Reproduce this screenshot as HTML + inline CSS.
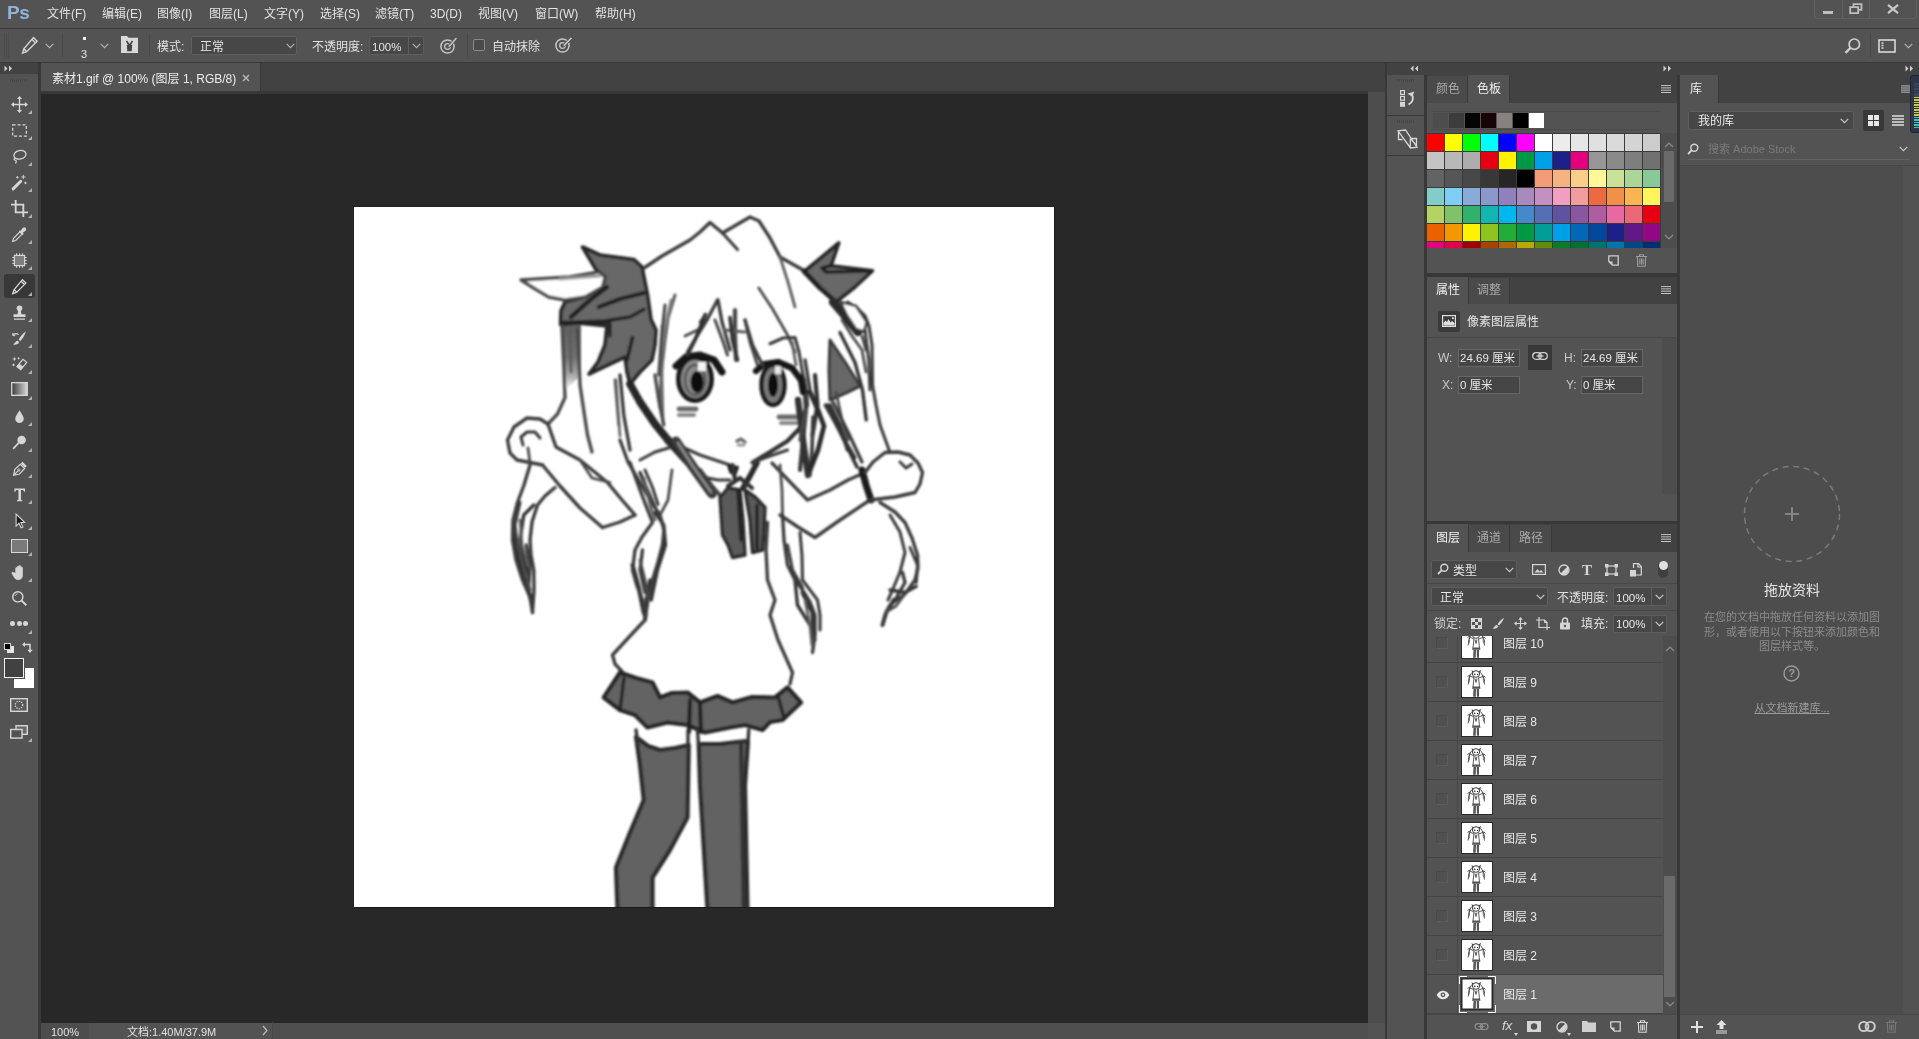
<!DOCTYPE html>
<html lang="zh-CN">
<head>
<meta charset="utf-8">
<title>素材1.gif @ 100% (图层 1, RGB/8)</title>
<style>
*{box-sizing:border-box;margin:0;padding:0}
html,body{width:1919px;height:1039px;overflow:hidden;background:#535353}
body{position:relative;font-family:"Liberation Sans","Noto Sans CJK SC",sans-serif;font-size:12px;color:#e2e2e2;line-height:1}
.a{position:absolute}
.t{position:absolute;white-space:nowrap;line-height:16px;height:16px;will-change:transform}
.bg1{background:#535353}
.bg2{background:#424242}
.bd{background:#383838}
.inp{position:absolute;background:#454545;border:1px solid #666}
.dd{position:absolute;background:#474747;border:1px solid #5e5e5e;border-radius:2px}
svg{position:absolute;overflow:visible}
.ic{fill:none}
.icf{fill:#d6d6d6;stroke:none}
</style>
</head>
<body>
<!-- ===== frame ===== -->
<div class="a bg1" style="left:0;top:0;width:1919px;height:28px"></div>
<div class="a bd" style="left:0;top:28px;width:1919px;height:1px"></div>
<div class="a bg1" style="left:0;top:29px;width:1919px;height:33px"></div>
<div class="a bd" style="left:0;top:62px;width:1919px;height:1px"></div>
<!-- dark strip row under options bar -->
<div class="a bg2" style="left:0;top:63px;width:1919px;height:29px"></div>
<!-- left toolbar -->
<div class="a bg1" style="left:0;top:74px;width:38px;height:965px"></div>
<div class="a bd" style="left:38px;top:63px;width:3px;height:976px"></div>
<!-- document tab -->
<div class="a bg1" style="left:41px;top:63px;width:219px;height:28px"></div>
<div class="a bd" style="left:260px;top:63px;width:1px;height:28px"></div>
<!-- canvas area -->
<div class="a bd" style="left:41px;top:91px;width:1327px;height:3px"></div>
<div class="a" style="left:41px;top:93.5px;width:1327px;height:929.5px;background:#282828"></div>
<!-- doc scrollbar column + status bar -->
<div class="a" style="left:1368px;top:92px;width:17px;height:947px;background:#4d4d4d"></div>
<div class="a bg1" style="left:41px;top:1023px;width:1344px;height:16px"></div>
<!-- right dock -->
<div class="a bd" style="left:1385px;top:63px;width:2px;height:976px"></div>
<div class="a bg1" style="left:1387px;top:75px;width:37px;height:964px"></div>
<div class="a bd" style="left:1424px;top:75px;width:3px;height:964px"></div>
<div class="a bd" style="left:1677px;top:75px;width:3px;height:964px"></div>
<!-- white canvas -->
<div class="a" style="left:354px;top:207px;width:700px;height:700px;background:#fff;box-shadow:1px 1px 0 #1a1a1a,-1px -1px 0 #232323"></div>
<!-- ===== canvas artwork ===== -->
<svg style="left:0;top:0" width="1919" height="1039" viewBox="0 0 1919 1039">
<defs><filter id="sf" x="-5%" y="-5%" width="110%" height="110%"><feGaussianBlur stdDeviation="0.9"/></filter><linearGradient id="tailg" x1="0" y1="0" x2="0" y2="1"><stop offset="0" stop-color="#5e5e5e"/><stop offset="0.5" stop-color="#707070"/><stop offset="0.8" stop-color="#b0b0b0"/><stop offset="1" stop-color="#ffffff"/></linearGradient><clipPath id="cv"><rect x="354" y="207" width="700" height="700"/></clipPath></defs>
<g clip-path="url(#cv)" filter="url(#sf)" stroke-linejoin="round" stroke-linecap="round">
<path d="M561,324 L581,324 L581,376 L565,390 Z" fill="url(#tailg)" stroke="none" stroke-width="0.0" />
<path d="M582.5,247 L600,255 L634,259.5 L642,267 L647.5,294.5 L651,319.5 L656,330 L655,345 L652,360 L640,372 L630,384 L627,372 L625,357 L612,363 L589,374 L598,362 L605,345 L607,326 L577.5,323 L560.6,324.5 L561,311 L565,302 L585,297 L602.5,287 L605,277 L596,269.5 L590,259.5 Z" fill="#686868" stroke="#262626" stroke-width="3.64" />
<path d="M521,280 L570,277 L598.75,272 L605,277 L602.5,287 L585,297 L565,300 L548.75,297 L533.75,288 Z" fill="#fff" stroke="#4a4a4a" stroke-width="3.36" />
<path d="M560,279 L600,276" fill="none" stroke="#9a9a9a" stroke-width="2.8" />
<path d="M643.75,293 L620,299 L598.75,307" fill="none" stroke="#222" stroke-width="4.2" />
<path d="M643.75,309.5 L630,317 L606,320.75" fill="none" stroke="#222" stroke-width="3.64" />
<path d="M607,287 L590,300 L571,317" fill="none" stroke="#222" stroke-width="4.48" />
<path d="M610,322 L610,336" fill="none" stroke="#222" stroke-width="3.08" />
<path d="M632.5,337.5 L627,360" fill="none" stroke="#222" stroke-width="3.64" />
<path d="M561,323 L608,321.5" fill="none" stroke="#222" stroke-width="4.48" />
<path d="M562,326 L564,370 L565,397.5 L557.5,414 L548,424" fill="none" stroke="#4a4a4a" stroke-width="3.36" />
<path d="M577.5,329 L579,360 L580,385 L584,412 L587.5,435 L592,452" fill="none" stroke="#4a4a4a" stroke-width="3.36" />
<path d="M570,330 L571,372" fill="none" stroke="#5c5c5c" stroke-width="2.8" />
<path d="M644,268 L662,256 L690,240 L700,232 L710,222.5 L722.5,233 L750,217 L759,221 L770,238 L780,257 L803,270" fill="none" stroke="#3a3a3a" stroke-width="3.36" />
<path d="M722.5,233 L737.5,249.5" fill="none" stroke="#3a3a3a" stroke-width="3.08" />
<path d="M838.75,243 L831,265.75 L872.5,270.75 L855,287 L836,302 L820,288 L803.75,272 Z" fill="#686868" stroke="#262626" stroke-width="3.64" />
<path d="M831,265.75 L822,268 L826,272 L870,271" fill="none" stroke="#222" stroke-width="3.64" />
<path d="M804,271 L820,288 L836,302" fill="none" stroke="#222" stroke-width="4.76" />
<path d="M833,302 L845,316 L858,332" fill="none" stroke="#2a2a2a" stroke-width="8.4" />
<path d="M830,340 L845,362 L860,386 L848,392 L830,400 L829,370 Z" fill="#686868" stroke="#3a3a3a" stroke-width="3.08" />
<path d="M847.5,302 L858,309 L865,315.75 L869,326 L872,345 L872.5,385 L876,405 L880,425 L890,452.5" fill="none" stroke="#3a3a3a" stroke-width="3.08" />
<path d="M842,320 L852,336 L862,350 L866,372" fill="none" stroke="#484848" stroke-width="2.8" />
<path d="M862,336 L866,350" fill="none" stroke="#484848" stroke-width="2.8" />
<path d="M825,405 L838,428 L855,457.5" fill="none" stroke="#3a3a3a" stroke-width="3.08" />
<path d="M836,392 L842,420 L848,440" fill="none" stroke="#484848" stroke-width="2.8" />
<path d="M780,257 L788,282 L795,307" fill="none" stroke="#5c5c5c" stroke-width="2.8" />
<path d="M758.75,288 L772,308 L787.5,335 L795,352" fill="none" stroke="#484848" stroke-width="2.8" />
<path d="M675,295 L668,318 L665,340 L661,375 L660,407.5" fill="none" stroke="#5c5c5c" stroke-width="3.08" />
<path d="M671,300 L664,330 L662,352" fill="none" stroke="#888" stroke-width="2.8" />
<path d="M662,326 L662,380 L663,422" fill="none" stroke="#6a6a6a" stroke-width="2.8" />
<path d="M616,380 L618,410 L620,436" fill="none" stroke="#6a6a6a" stroke-width="2.8" />
<path d="M717.5,300 L708,318 L697,336 L687.5,352" fill="none" stroke="#3a3a3a" stroke-width="3.36" />
<path d="M718,300 L722,322 L730,350" fill="none" stroke="#3a3a3a" stroke-width="3.36" />
<path d="M735,310 L735,335 L736,360" fill="none" stroke="#4a4a4a" stroke-width="4.2" />
<path d="M745,320 L750,342 L757.5,365" fill="none" stroke="#484848" stroke-width="3.08" />
<path d="M697.5,330 L685,336" fill="none" stroke="#484848" stroke-width="2.8" />
<path d="M706,314 L700,322" fill="none" stroke="#484848" stroke-width="2.8" />
<path d="M770,343.75 L783,338 L795,337.5 L799,352 L802.5,372.5" fill="none" stroke="#3a3a3a" stroke-width="3.08" />
<path d="M792,342 L796,365" fill="none" stroke="#5c5c5c" stroke-width="2.8" />
<path d="M724,330 L745,332" fill="none" stroke="#5c5c5c" stroke-width="2.8" />
<path d="M630,384 L640,402 L655,424 L668,440" fill="none" stroke="#262626" stroke-width="7.7" />
<path d="M668,440 L690,464 L710,492" fill="none" stroke="#2a2a2a" stroke-width="8.4" />
<path d="M700,470 L712,486 L724,500" fill="none" stroke="#484848" stroke-width="4.2" />
<path d="M680,446 L700,455 L730,465" fill="none" stroke="#3a3a3a" stroke-width="3.08" />
<path d="M802.5,375 L806,392 L807,405 L800,428 L787.5,441 L770,452 L752.5,462.5" fill="none" stroke="#333" stroke-width="4.2" />
<path d="M804,380 L806,410 L803,440 L800,470" fill="none" stroke="#3a3a3a" stroke-width="4.2" />
<ellipse cx="695" cy="379" rx="16.500" ry="21.500" fill="#8a8a8a" stroke="#1a1a1a" stroke-width="5"/>
<ellipse cx="695" cy="380" rx="10" ry="15" fill="none" stroke="#555" stroke-width="2.500"/>
<ellipse cx="697" cy="382" rx="6.500" ry="11" fill="#0a0a0a"/>
<rect x="698" y="362" width="8" height="9" fill="#f4f4f4"/>
<path d="M676,366 L686,357 L700,355 L714,360 L722,372" fill="none" stroke="#141414" stroke-width="7.0" />
<ellipse cx="773" cy="385" rx="11.500" ry="20" fill="#7a7a7a" stroke="#1a1a1a" stroke-width="4.500"/>
<ellipse cx="773" cy="385" rx="5" ry="12" fill="#0a0a0a"/>
<rect x="775" y="366" width="6" height="8" fill="#e8e8e8"/>
<path d="M756,371 L764,364 L778,362 L792,368 L801,380 L803,392" fill="none" stroke="#141414" stroke-width="6.3" />
<path d="M679,409 L696,409" fill="none" stroke="#6a6a6a" stroke-width="4.9" />
<path d="M679,415 L694,415" fill="none" stroke="#8a8a8a" stroke-width="4.2" />
<path d="M779,417 L802,417" fill="none" stroke="#6a6a6a" stroke-width="4.9" />
<path d="M781,423 L800,423" fill="none" stroke="#8a8a8a" stroke-width="4.2" />
<path d="M737,441 L741,439 L745,442" fill="none" stroke="#6a6a6a" stroke-width="3.36" />
<path d="M738,445 L744,445" fill="none" stroke="#999" stroke-width="2.8" />
<path d="M533.75,505 L523.75,515 L520,540 L523.75,560 L528.75,575" fill="none" stroke="#333" stroke-width="3.36" />
<path d="M515,535 L517.5,557.5 L525,580 L531.25,600" fill="none" stroke="#2a2a2a" stroke-width="4.2" />
<path d="M526.25,545 L530,565 L528.75,585" fill="none" stroke="#3a3a3a" stroke-width="3.36" />
<path d="M520,502.5 L515,525 L517.5,547.5" fill="none" stroke="#3a3a3a" stroke-width="3.08" />
<path d="M640,472.5 L647.5,490 L655,507.5" fill="none" stroke="#333" stroke-width="3.36" />
<path d="M645,470 L652.5,487.5 L658,504.5" fill="none" stroke="#3a3a3a" stroke-width="3.08" />
<path d="M655,512.5 L663.75,525 L665.5,545 L657.5,570 L651.25,600" fill="none" stroke="#333" stroke-width="3.36" />
<path d="M632.5,565 L638.75,587.5 L643.75,612.5" fill="none" stroke="#2a2a2a" stroke-width="4.2" />
<path d="M642.5,550 L640,570 L645,592.5" fill="none" stroke="#3a3a3a" stroke-width="3.36" />
<path d="M650,580 L646.25,600 L645.5,618.75" fill="none" stroke="#333" stroke-width="3.64" />
<path d="M795,580 L797.5,605 L810,625 L815,640" fill="none" stroke="#333" stroke-width="3.36" />
<path d="M787.5,545 L792.5,570 L802.5,587.5" fill="none" stroke="#3a3a3a" stroke-width="3.08" />
<path d="M802.5,592.5 L812.5,612.5 L813.75,637.5" fill="none" stroke="#2a2a2a" stroke-width="3.92" />
<path d="M890,590 L905,592.5 L916.25,586.25" fill="none" stroke="#333" stroke-width="3.36" />
<path d="M902.5,572.5 L905,582.5 L895,600" fill="none" stroke="#3a3a3a" stroke-width="3.36" />
<path d="M893.75,600 L886.25,612.5 L882.5,625" fill="none" stroke="#2a2a2a" stroke-width="3.92" />
<path d="M910,547.5 L917.5,565 L916.25,582.5" fill="none" stroke="#3a3a3a" stroke-width="3.08" />
<path d="M840,332.5 L855,362.5 L862.5,390 L866.25,420" fill="none" stroke="#333" stroke-width="3.36" />
<path d="M850,305 L865,330 L868.75,360 L870,390" fill="none" stroke="#3a3a3a" stroke-width="3.08" />
<path d="M830,405 L840,425 L847.5,450" fill="none" stroke="#333" stroke-width="3.64" />
<path d="M815,375 L817.5,405 L812.5,435" fill="none" stroke="#333" stroke-width="4.2" />
<path d="M805,360 L810,390" fill="none" stroke="#3a3a3a" stroke-width="3.36" />
<path d="M655,375 L658.75,400 L663.75,425" fill="none" stroke="#484848" stroke-width="3.36" />
<path d="M665,305 L661.25,340 L658.75,375" fill="none" stroke="#484848" stroke-width="3.08" />
<path d="M620,375 L623.75,415 L630,450" fill="none" stroke="#3a3a3a" stroke-width="3.36" />
<path d="M615,380 L618.75,425" fill="none" stroke="#5c5c5c" stroke-width="2.8" />
<path d="M705,315 L695,340 L687.5,355" fill="none" stroke="#333" stroke-width="3.64" />
<path d="M730,317.5 L732.5,340 L737.5,360" fill="none" stroke="#333" stroke-width="3.64" />
<path d="M745,320 L752.5,345 L762.5,365" fill="none" stroke="#3a3a3a" stroke-width="3.36" />
<path d="M715,320 L722.5,340 L727.5,355" fill="none" stroke="#484848" stroke-width="3.08" />
<path d="M676,441 L690,462 L712,494" fill="none" stroke="#3a3a3a" stroke-width="9.1" />
<path d="M678,443 L692,465 L711,492" fill="none" stroke="#8a8a8a" stroke-width="2.8" />
<path d="M728,465 L738,467 L735,476 L730,472 Z" fill="#222" stroke="#222" stroke-width="2.1" />
<path d="M757,463 L750,476 L743,488" fill="none" stroke="#2a2a2a" stroke-width="5.6" />
<path d="M798,400 L803,440 L808,475" fill="none" stroke="#333" stroke-width="6.3" />
<path d="M813,417 L812,450 L810,475" fill="none" stroke="#3a3a3a" stroke-width="3.64" />
<path d="M827,405 L842,436 L857,467" fill="none" stroke="#333" stroke-width="3.64" />
<path d="M833,402 L848,432 L862,462" fill="none" stroke="#3a3a3a" stroke-width="3.36" />
<path d="M806,410 L800,440" fill="none" stroke="#484848" stroke-width="3.36" />
<path d="M810,392 L818,410 L824,426 L818,450 L810,470" fill="none" stroke="#2a2a2a" stroke-width="4.76" />
<path d="M840.5,302 L856,306 L866.6,322 L864,331.6 L856,329 L847,315.5 Z" fill="#fff" stroke="#3a3a3a" stroke-width="2.8" />
<path d="M732.5,465 L735,480" fill="none" stroke="#333" stroke-width="4.2" />
<path d="M705,477.5 L718,480 L730,480" fill="none" stroke="#3a3a3a" stroke-width="3.08" />
<path d="M640,460 L655,452 L670,447.5" fill="none" stroke="#3a3a3a" stroke-width="3.08" />
<path d="M752.5,462.5 L770,456 L787.5,450" fill="none" stroke="#3a3a3a" stroke-width="3.08" />
<path d="M720,497.5 L728,488 L740,490 L743,520 L745,555 L732.5,557.5 L728,545 L722.5,535 Z" fill="#5a5a5a" stroke="#2a2a2a" stroke-width="3.36" />
<path d="M745,490 L755,497 L765,507.5 L764,530 L762.5,550 L752.5,552.5 L750,520 Z" fill="#5a5a5a" stroke="#2a2a2a" stroke-width="3.36" />
<path d="M738,492 L741,540" fill="none" stroke="#222" stroke-width="3.36" />
<path d="M757,505 L757,548" fill="none" stroke="#222" stroke-width="3.36" />
<path d="M728,486 L740,478 L752,488" fill="none" stroke="#333" stroke-width="4.2" />
<path d="M548,424 L540,419 L527,418 L514,427 L507.5,440 L510,453 L517,460 L530,462.5 L542.5,465" fill="none" stroke="#3a3a3a" stroke-width="3.36" />
<path d="M540,438 L535,432 L527,432 L521,437 L523,445" fill="none" stroke="#3a3a3a" stroke-width="3.08" />
<path d="M530,462.5 L528,448" fill="none" stroke="#484848" stroke-width="2.8" />
<path d="M542.5,465 L560,486 L580,508 L602.5,527.5" fill="none" stroke="#3a3a3a" stroke-width="3.36" />
<path d="M548,424 L556,447 L580,460 L607.5,482.5 L622,500 L635,515" fill="none" stroke="#3a3a3a" stroke-width="3.36" />
<path d="M602.5,527.5 L620,522 L635,515" fill="none" stroke="#3a3a3a" stroke-width="3.36" />
<path d="M580,460 L592,478 L610,482.5" fill="none" stroke="#484848" stroke-width="2.8" />
<path d="M530,465 L524,485 L517.5,502.5 L513,520 L512.5,540 L516,560 L522.5,580 L530,597 L532.5,612.5" fill="none" stroke="#3a3a3a" stroke-width="3.36" />
<path d="M555,487.5 L545,496 L537.5,505 L532,522 L530,540 L531,555 L533.75,570 L534,590 L532.5,612.5" fill="none" stroke="#3a3a3a" stroke-width="3.36" />
<path d="M520,520 L522,545 L528,565" fill="none" stroke="#5c5c5c" stroke-width="2.8" />
<path d="M518,545 L524,570 L530,590" fill="none" stroke="#484848" stroke-width="3.08" />
<path d="M620,440 L628,462 L640,482.5 L650,500 L660,515 L664,530 L662.5,545 L658,562 L652.5,580 L648,600 L645,620" fill="none" stroke="#3a3a3a" stroke-width="3.36" />
<path d="M630,462.5 L640,490 L652.5,522.5 L642,537 L635,550 L632.5,570 L637,586 L642.5,600 L645,620" fill="none" stroke="#3a3a3a" stroke-width="3.36" />
<path d="M644,478 L650,505 L655,520" fill="none" stroke="#5c5c5c" stroke-width="2.8" />
<path d="M640,560 L645,580 L648,598" fill="none" stroke="#484848" stroke-width="2.8" />
<path d="M645,620 L630,636 L612.5,655 L615,664 L622.5,672" fill="none" stroke="#3a3a3a" stroke-width="3.36" />
<path d="M767.5,522.5 L766,550 L767.5,580 L775,600 L770,615 L778,640 L792.5,672.5 L790,684" fill="none" stroke="#3a3a3a" stroke-width="3.36" />
<path d="M660,515 L668,500 L672,470" fill="none" stroke="#484848" stroke-width="2.8" />
<path d="M772,463 L790,482 L807.5,500 L830,490 L848,480 L865,472.5" fill="none" stroke="#3a3a3a" stroke-width="3.36" />
<path d="M780,515 L798,527 L815,537.5 L840,520 L870,500" fill="none" stroke="#3a3a3a" stroke-width="3.36" />
<path d="M862,470 L866,485 L871,500" fill="none" stroke="#1e1e1e" stroke-width="7.0" />
<path d="M865,472.5 L873,462 L885,452.5 L898,452 L910,455 L918,463 L922.5,472.5 L920,484 L915,492.5 L895,497 L870,500" fill="none" stroke="#3a3a3a" stroke-width="3.36" />
<path d="M900,462 L906,468 L912,464" fill="none" stroke="#3a3a3a" stroke-width="3.08" />
<path d="M780,465 L782,490 L782.5,515" fill="none" stroke="#484848" stroke-width="2.8" />
<path d="M880,502.5 L895,512 L905,522.5 L912,538 L917.5,555 L918,568 L915,580 L905,594 L890,605 L885,615 L882.5,625" fill="none" stroke="#3a3a3a" stroke-width="3.36" />
<path d="M890,515 L900,532 L905,552.5 L900,572 L892.5,590 L888,600" fill="none" stroke="#3a3a3a" stroke-width="3.08" />
<path d="M905,594 L896,606 L886,612" fill="none" stroke="#484848" stroke-width="2.8" />
<path d="M782.5,515 L784,540 L787.5,565 L794,578 L802.5,590 L810,602 L815,615 L815,635 L812.5,652.5" fill="none" stroke="#3a3a3a" stroke-width="3.36" />
<path d="M800,532.5 L802,556 L802.5,580 L810,590 L817.5,600 L820,615 L820,630" fill="none" stroke="#3a3a3a" stroke-width="3.08" />
<path d="M805,600 L810,625 L812,645" fill="none" stroke="#5c5c5c" stroke-width="2.8" />
<path d="M620,672.5 L636,678 L652.5,682.5 L660,697.5 L672,693 L687.5,692.5 L700,702.5 L717.5,696 L732.5,702.5 L752,697 L775,697.5 L787.5,687.5 L801,702.5 L782.5,720 L770,722 L762.5,730 L745,725 L730,727.5 L705,732.5 L687.5,725 L667.5,722.5 L647.5,727.5 L635,715 L620,710 L603.75,697.5 Z" fill="#646464" stroke="#262626" stroke-width="4.2" />
<path d="M624,678 L620,710" fill="none" stroke="#222" stroke-width="3.36" />
<path d="M690,700 L689,732" fill="none" stroke="#222" stroke-width="4.2" />
<path d="M700,704 L701,732" fill="none" stroke="#222" stroke-width="4.2" />
<path d="M778,696 L784,718" fill="none" stroke="#222" stroke-width="3.36" />
<path d="M636,737 L648,746 L660,750 L675,748 L688.75,745 L687.5,817.5 L670,850 L652.5,877.5 L652.5,910 L617.5,910 L616,867.5 L630,832.5 L643.75,800 L640,765 Z" fill="#626262" stroke="#2a2a2a" stroke-width="4.2" />
<path d="M636,730 L638,745" fill="none" stroke="#333" stroke-width="3.36" />
<path d="M688,730 L688,746" fill="none" stroke="#333" stroke-width="3.36" />
<path d="M698.75,744 L720,744 L741,741.5 L748,741 L745,785 L747.5,910 L707.5,910 L700,785 Z" fill="#626262" stroke="#2a2a2a" stroke-width="4.2" />
<path d="M741,742.5 L742,800 L743.75,906" fill="none" stroke="#333" stroke-width="4.2" />
<path d="M697.5,730 L698.5,745" fill="none" stroke="#333" stroke-width="3.36" />
<path d="M748.75,730 L748,742" fill="none" stroke="#333" stroke-width="3.36" />
</g></svg>
<!-- ===== menu bar ===== -->
<div class="t" style="left:7px;top:2px;font-size:19px;font-weight:bold;color:#8fb3dd;line-height:22px;height:22px;letter-spacing:-0.5px">Ps</div>
<div class="t" style="left:47px;top:6px">文件(F)</div>
<div class="t" style="left:102px;top:6px">编辑(E)</div>
<div class="t" style="left:157px;top:6px">图像(I)</div>
<div class="t" style="left:209px;top:6px">图层(L)</div>
<div class="t" style="left:264px;top:6px">文字(Y)</div>
<div class="t" style="left:320px;top:6px">选择(S)</div>
<div class="t" style="left:375px;top:6px">滤镜(T)</div>
<div class="t" style="left:430px;top:6px">3D(D)</div>
<div class="t" style="left:478px;top:6px">视图(V)</div>
<div class="t" style="left:535px;top:6px">窗口(W)</div>
<div class="t" style="left:595px;top:6px">帮助(H)</div>
<!-- window buttons -->
<div class="a" style="left:1814px;top:-6px;width:103px;height:25px;border:1px solid #616161;border-radius:4px"></div>
<div class="a" style="left:1842px;top:0;width:1px;height:18px;background:#616161"></div>
<div class="a" style="left:1869px;top:0;width:1px;height:18px;background:#616161"></div>
<div class="a" style="left:1823px;top:11px;width:10px;height:3px;background:#bdbdbd"></div>
<svg style="left:1849px;top:3px" width="14" height="12" viewBox="0 0 14 12"><path d="M4.5 4V1.2h8v5.6H10M1.2 4.2h8v6h-8z" fill="none" stroke="#bdbdbd" stroke-width="1.8"/></svg>
<svg style="left:1887px;top:4px" width="12" height="10" viewBox="0 0 12 10"><path d="M1 0.8l10 8.4M11 0.8L1 9.2" fill="none" stroke="#c8c8c8" stroke-width="2.2"/></svg>

<!-- ===== options bar ===== -->
<div class="a" style="left:4px;top:33px;width:5px;height:25px;background:repeating-linear-gradient(90deg,#4b4b4b 0 1px,#535353 1px 2px)"></div>
<svg style="left:21px;top:36px" width="18" height="19" viewBox="0 0 18 19"><path d="M12.5 1.6l3.6 3.6L5.6 15.7 1.5 17.2l1.3-4.3z M11 3.4l3.4 3.4 M2.9 12.8l2.7 2.8" class="ic" stroke="#d6d6d6" stroke-width="1.4"/></svg>
<svg style="left:45px;top:43px" width="9" height="6" viewBox="0 0 9 6"><path d="M0.7 0.8l3.8 3.8 3.8-3.8" fill="none" stroke-width="1.1" stroke="#b4b4b4"/></svg>
<div class="a" style="left:62px;top:34px;width:1px;height:23px;background:#484848"></div>
<div class="a" style="left:83px;top:37px;width:3px;height:3px;background:#f0f0f0"></div>
<div class="t" style="left:81px;top:46px;font-size:11px">3</div>
<svg style="left:100px;top:43px" width="9" height="6" viewBox="0 0 9 6"><path d="M0.7 0.8l3.8 3.8 3.8-3.8" fill="none" stroke-width="1.1" stroke="#b4b4b4"/></svg>
<svg style="left:121px;top:36px" width="17" height="17" viewBox="0 0 17 17"><path d="M0 0h6l1.5 1.8H17V17H0z" fill="#d9d9d9"/><path d="M8.5 14.5V8M8.5 9.5L5.5 5M8.5 9.5L11.5 5M7 14.5h3l.3-5h-3.6z" stroke="#454545" stroke-width="1.6" fill="#454545"/></svg>
<div class="a" style="left:149px;top:34px;width:1px;height:23px;background:#484848"></div>
<div class="t" style="left:157px;top:39px">模式:</div>
<div class="dd" style="left:191px;top:36px;width:106px;height:19px"></div>
<div class="t" style="left:200px;top:39px">正常</div>
<svg style="left:286px;top:43px" width="9" height="6" viewBox="0 0 9 6"><path d="M0.7 0.8l3.8 3.8 3.8-3.8" fill="none" stroke-width="1.1" stroke="#b4b4b4"/></svg>
<div class="t" style="left:312px;top:39px">不透明度:</div>
<div class="dd" style="left:369px;top:36px;width:55px;height:19px"></div>
<div class="a" style="left:408px;top:37px;width:1px;height:17px;background:#5e5e5e"></div>
<div class="t" style="left:372px;top:39px;font-size:11.5px">100%</div>
<svg style="left:412px;top:43px" width="9" height="6" viewBox="0 0 9 6"><path d="M0.7 0.8l3.8 3.8 3.8-3.8" fill="none" stroke-width="1.1" stroke="#b4b4b4"/></svg>
<svg style="left:439px;top:36px" width="19" height="19" viewBox="0 0 19 19"><circle cx="8.5" cy="10.5" r="6.6" class="ic" stroke="#c4c4c4" stroke-width="1.5"/><circle cx="8.5" cy="10.5" r="2.8" class="ic" stroke="#c4c4c4" stroke-width="1.3"/><path d="M16.8 1.2l1.6 1.6-7.2 8.2-2.6 1 .8-2.6z" fill="#c4c4c4" stroke="#535353" stroke-width="1"/></svg>
<div class="a" style="left:467px;top:34px;width:1px;height:23px;background:#484848"></div>
<div class="a" style="left:473px;top:39px;width:12px;height:12px;border:1px solid #8a8a8a;border-radius:2px;background:#4a4a4a"></div>
<div class="t" style="left:492px;top:39px">自动抹除</div>
<svg style="left:554px;top:36px" width="19" height="19" viewBox="0 0 19 19"><circle cx="8.5" cy="9.5" r="6.6" class="ic" stroke="#c4c4c4" stroke-width="1.5"/><circle cx="8.5" cy="9.5" r="2.8" class="ic" stroke="#c4c4c4" stroke-width="1.3"/><path d="M16.8 0.8l1.6 1.6-7.2 7.8-2.6 1 .8-2.6z" fill="#c4c4c4" stroke="#535353" stroke-width="1"/></svg>
<!-- right of options bar -->
<svg style="left:1844px;top:37px" width="18" height="18" viewBox="0 0 18 18"><circle cx="10.3" cy="7.2" r="5.2" class="ic" stroke="#d0d0d0" stroke-width="1.7"/><path d="M6.4 11L1.5 15.8" class="ic" stroke="#d0d0d0" stroke-width="2.4"/></svg>
<div class="a" style="left:1870px;top:33px;width:1px;height:24px;background:#484848"></div>
<svg style="left:1878px;top:39px" width="18" height="14" viewBox="0 0 18 14"><rect x="1" y="1" width="16" height="12" class="ic" stroke="#d9d9d9" stroke-width="1.6"/><path d="M3.5 4h2M3.5 6.5h2M3.5 9h2" class="ic" stroke="#d9d9d9" stroke-width="1.3"/></svg>
<svg style="left:1904px;top:43px" width="9" height="6" viewBox="0 0 9 6"><path d="M0.7 0.8l3.8 3.8 3.8-3.8" fill="none" stroke-width="1.1" stroke="#b4b4b4"/></svg>

<!-- ===== doc tab row ===== -->
<div class="t" style="left:52px;top:70.5px;color:#ededed">素材1.gif @ 100% (图层 1, RGB/8)</div>
<svg style="left:242px;top:74px" width="8" height="8" viewBox="0 0 8 8"><path d="M1 1l6 6M7 1L1 7" stroke="#b4b4b4" stroke-width="1.6" fill="none"/></svg>
<!-- collapse chevrons -->
<svg style="left:4px;top:65px" width="9" height="7" viewBox="0 0 9 7"><path d="M0.5 0.5L3.5 3.5 0.5 6.5zM5 0.5L8 3.5 5 6.5z" fill="#cfcfcf"/></svg>
<svg style="left:1410px;top:65px" width="9" height="7" viewBox="0 0 9 7"><path d="M3.5 0.5L0.5 3.5 3.5 6.5zM8 0.5L5 3.5 8 6.5z" fill="#cfcfcf"/></svg>
<svg style="left:1663px;top:65px" width="9" height="7" viewBox="0 0 9 7"><path d="M0.5 0.5L3.5 3.5 0.5 6.5zM5 0.5L8 3.5 5 6.5z" fill="#cfcfcf"/></svg>
<svg style="left:1905px;top:65px" width="9" height="7" viewBox="0 0 9 7"><path d="M0.5 0.5L3.5 3.5 0.5 6.5zM5 0.5L8 3.5 5 6.5z" fill="#cfcfcf"/></svg>
<!-- status bar -->
<div class="a" style="left:41px;top:1023px;width:48px;height:16px;background:#4d4d4d"></div>
<div class="a" style="left:273px;top:1023px;width:1095px;height:16px;background:#4f4f4f"></div>
<div class="t" style="left:51px;top:1023.5px;font-size:11px">100%</div>
<div class="t" style="left:127px;top:1023.5px;font-size:11px">文档:1.40M/37.9M</div>
<svg style="left:262px;top:1025px" width="6" height="11" viewBox="0 0 6 11"><path d="M1 1l4 4.5L1 10" class="ic" stroke="#bdbdbd" stroke-width="1.2"/></svg>
<div class="a" style="left:272px;top:1022px;width:1px;height:17px;background:#484848"></div>
<!-- ===== toolbox ===== -->
<div class="a" style="left:10px;top:79px;width:18px;height:3px;background:repeating-linear-gradient(90deg,#464646 0 1px,#535353 1px 2px)"></div>
<div class="a" style="left:4px;top:274px;width:31px;height:24px;background:#383838;border-radius:3px"></div>
<svg style="left:10.5px;top:95.5px" width="17" height="17" viewBox="0 0 20 20"><path d="M10 1.5v17M1.5 10h17" stroke="#d6d6d6" fill="none" stroke-width="1.6"/><path d="M10 0l3 3.6H7zM10 20l3-3.6H7zM0 10l3.6-3v6zM20 10l-3.6-3v6z" fill="#d6d6d6"/></svg>
<svg style="left:28px;top:110px" width="4" height="4" viewBox="0 0 4 4"><path d="M4 0v4H0z" fill="#b0b0b0"/></svg>
<svg style="left:10.5px;top:121.5px" width="17" height="17" viewBox="0 0 20 20"><rect x="2" y="3.5" width="16" height="13" stroke="#d6d6d6" fill="none" stroke-width="1.5" stroke-dasharray="3.5 2.2"/></svg>
<svg style="left:28px;top:136px" width="4" height="4" viewBox="0 0 4 4"><path d="M4 0v4H0z" fill="#b0b0b0"/></svg>
<svg style="left:10.5px;top:147.5px" width="17" height="17" viewBox="0 0 20 20"><ellipse cx="10.5" cy="8" rx="7.2" ry="5" stroke="#d6d6d6" fill="none" stroke-width="1.5" transform="rotate(-12 10.5 8)"/><path d="M5 11.5c-1.8.5-2 2.500 0 2.800 1.600.2 1.500 2.200.2 3.900" stroke="#d6d6d6" fill="none" stroke-width="1.4"/></svg>
<svg style="left:28px;top:162px" width="4" height="4" viewBox="0 0 4 4"><path d="M4 0v4H0z" fill="#b0b0b0"/></svg>
<svg style="left:10.5px;top:173.5px" width="17" height="17" viewBox="0 0 20 20"><path d="M2.500 17.500L11.500 8.500" stroke="#d6d6d6" stroke-width="3.4" stroke-linecap="round"/><path d="M14.500 1v5M12 3.500h5M17 9v3M15.500 10.500h3M7.500 2.500v3M6 4h3" stroke="#d6d6d6" fill="none" stroke-width="1.100"/></svg>
<svg style="left:28px;top:188px" width="4" height="4" viewBox="0 0 4 4"><path d="M4 0v4H0z" fill="#b0b0b0"/></svg>
<svg style="left:10.5px;top:199.5px" width="17" height="17" viewBox="0 0 20 20"><path d="M5.500 0v14.500H20M0 5.500h14.500V20" stroke="#d6d6d6" fill="none" stroke-width="2.200"/></svg>
<svg style="left:28px;top:214px" width="4" height="4" viewBox="0 0 4 4"><path d="M4 0v4H0z" fill="#b0b0b0"/></svg>
<svg style="left:10.5px;top:225.5px" width="17" height="17" viewBox="0 0 20 20"><path d="M2 18l1-3.500 7.500-7.500 2.500 2.500-7.500 7.500z" stroke="#d6d6d6" fill="none" stroke-width="1.400"/><path d="M10 5.500l4.500 4.500M11.500 7l3-4c1.200-1.500 3.500.800 2 2l-4 3z" stroke="#d6d6d6" stroke-width="1.800" fill="#d6d6d6"/></svg>
<svg style="left:28px;top:240px" width="4" height="4" viewBox="0 0 4 4"><path d="M4 0v4H0z" fill="#b0b0b0"/></svg>
<svg style="left:10.5px;top:251.5px" width="17" height="17" viewBox="0 0 20 20"><rect x="4" y="4" width="12" height="12" fill="#7e7e7e" stroke="#d6d6d6" stroke-width="1.400"/><path d="M6.500 1.500v17M10 1.500v17M13.500 1.500v17M1.500 6.500h17M1.500 10h17M1.500 13.500h17" stroke="#d6d6d6" fill="none" stroke-width="1.200" stroke-dasharray="2.500 12 2.500 0"/></svg>
<svg style="left:28px;top:266px" width="4" height="4" viewBox="0 0 4 4"><path d="M4 0v4H0z" fill="#b0b0b0"/></svg>
<svg style="left:10.5px;top:277.5px" width="17" height="17" viewBox="0 0 20 20"><path d="M13.500 2l4 4L6.500 17 2 18.500 3.500 14z M12 3.800l3.800 3.800 M3.800 13.800l2.800 2.800" stroke="#d6d6d6" fill="none" stroke-width="1.500"/></svg>
<svg style="left:28px;top:292px" width="4" height="4" viewBox="0 0 4 4"><path d="M4 0v4H0z" fill="#b0b0b0"/></svg>
<svg style="left:10.5px;top:303.5px" width="17" height="17" viewBox="0 0 20 20"><circle cx="10" cy="5" r="3.300" fill="#d6d6d6"/><path d="M8.500 7h3l.8 5h-4.600zM3 12h14v3.200H3zM3.500 17h13v1.400h-13z" fill="#d6d6d6"/></svg>
<svg style="left:28px;top:318px" width="4" height="4" viewBox="0 0 4 4"><path d="M4 0v4H0z" fill="#b0b0b0"/></svg>
<svg style="left:10.5px;top:329.5px" width="17" height="17" viewBox="0 0 20 20"><path d="M17.500 1.500c-4 3-6.500 6-8.500 10l2 1.500c3-3 5-6.500 6.500-11.500zM8 12.500c-2.500 0-3 2.500-5.500 4.500 3 .8 6.500-.5 7-3z" fill="#d6d6d6"/><path d="M2 6.500c2-2.500 5-2.500 7-1M2 6.500l.3-3M2 6.500l3 .3" stroke="#d6d6d6" fill="none" stroke-width="1.300"/></svg>
<svg style="left:28px;top:344px" width="4" height="4" viewBox="0 0 4 4"><path d="M4 0v4H0z" fill="#b0b0b0"/></svg>
<svg style="left:10.5px;top:355.5px" width="17" height="17" viewBox="0 0 20 20"><path d="M7 12.500l7-8.500 4.500 3.500-7 8.500z" stroke="#d6d6d6" fill="none" stroke-width="1.400"/><path d="M7 12.500l3-3.500 4.500 3.500-3 3.500z" fill="#d6d6d6"/><path d="M4 1.500v4M2 3.500h4M3 9v3M1.500 10.500h3M9 1.500v2.500M7.800 2.800h2.400" stroke="#d6d6d6" fill="none" stroke-width="1.100"/></svg>
<svg style="left:28px;top:370px" width="4" height="4" viewBox="0 0 4 4"><path d="M4 0v4H0z" fill="#b0b0b0"/></svg>
<svg style="left:10.5px;top:407.5px" width="17" height="17" viewBox="0 0 20 20"><path d="M10 2.500c2 4 5 6.500 5 10a5 5 0 01-10 0c0-3.500 3-6 5-10z" fill="#d6d6d6"/></svg>
<svg style="left:28px;top:422px" width="4" height="4" viewBox="0 0 4 4"><path d="M4 0v4H0z" fill="#b0b0b0"/></svg>
<svg style="left:10.5px;top:433.5px" width="17" height="17" viewBox="0 0 20 20"><circle cx="12.500" cy="7" r="5" fill="#d6d6d6"/><path d="M9 10.500L2.500 17.500" stroke="#d6d6d6" stroke-width="2"/></svg>
<svg style="left:28px;top:448px" width="4" height="4" viewBox="0 0 4 4"><path d="M4 0v4H0z" fill="#b0b0b0"/></svg>
<svg style="left:10.5px;top:459.5px" width="17" height="17" viewBox="0 0 20 20"><path d="M3 18l1.500-7 6.500-6 5 5-6 6.500z M3 18l5.500-5.500" stroke="#d6d6d6" fill="none" stroke-width="1.400"/><circle cx="9.300" cy="11.700" r="1.300" stroke="#d6d6d6" fill="none" stroke-width="1.100"/><path d="M11.500 4l2-2 5 5-2 2z" fill="#d6d6d6"/></svg>
<svg style="left:28px;top:474px" width="4" height="4" viewBox="0 0 4 4"><path d="M4 0v4H0z" fill="#b0b0b0"/></svg>
<svg style="left:10.5px;top:485.5px" width="17" height="17" viewBox="0 0 20 20"><path d="M4 3h12.500v3.800h-1.200c-.3-1.500-.8-2.200-2.200-2.200h-1.300v11c0 1 .5 1.300 1.800 1.400v1h-6.700v-1c1.300-.1 1.800-.4 1.800-1.400v-11H7.400c-1.400 0-1.900.7-2.200 2.200H4z" fill="#d6d6d6"/></svg>
<svg style="left:28px;top:500px" width="4" height="4" viewBox="0 0 4 4"><path d="M4 0v4H0z" fill="#b0b0b0"/></svg>
<svg style="left:10.5px;top:511.5px" width="17" height="17" viewBox="0 0 20 20"><path d="M6 2.500v14l3.300-3.200 2.500 5.200 2.200-1-2.500-5 4.500-.3z" fill="#1c1c1c" stroke="#d6d6d6" stroke-width="1.300"/></svg>
<svg style="left:28px;top:526px" width="4" height="4" viewBox="0 0 4 4"><path d="M4 0v4H0z" fill="#b0b0b0"/></svg>
<svg style="left:10.5px;top:589.5px" width="17" height="17" viewBox="0 0 20 20"><circle cx="8" cy="8" r="6" stroke="#d6d6d6" fill="none" stroke-width="1.700"/><path d="M12.500 12.500l5.500 5.500" stroke="#d6d6d6" stroke-width="2.400"/><path d="M4.800 7a3.500 3.500 0 013-2.500" stroke="#d6d6d6" fill="none" stroke-width="1"/></svg>
<svg style="left:10.5px;top:382px" width="17" height="14" viewBox="0 0 18 15"><defs><linearGradient id="gr1" x1="0" x2="1" y1="0" y2="0"><stop offset="0" stop-color="#3a3a3a"/><stop offset="1" stop-color="#d9d9d9"/></linearGradient></defs><rect x=".7" y=".7" width="16.600" height="13.600" fill="url(#gr1)" stroke="#d6d6d6" stroke-width="1.400"/></svg><svg style="left:28px;top:396px" width="4" height="4" viewBox="0 0 4 4"><path d="M4 0v4H0z" fill="#b0b0b0"/></svg>
<div class="a" style="left:10.5px;top:538.5px;width:17px;height:14px;background:#7a7a7a;border:1.500px solid #d6d6d6"></div><svg style="left:28px;top:552px" width="4" height="4" viewBox="0 0 4 4"><path d="M4 0v4H0z" fill="#b0b0b0"/></svg>
<svg style="left:10.5px;top:563.5px" width="17" height="17" viewBox="0 0 20 20"><path d="M5.500 11V5.200c0-1.400 2-1.400 2 0V9.500 3.400c0-1.400 2-1.400 2 0V9 2.800c0-1.400 2-1.400 2 0V9.500 4.600c0-1.400 2-1.400 2 0V13c0 3.500-2 5.500-5 5.500-2.500 0-3.700-1-5-3.500L1.200 11.300c-.7-1.300.8-2.300 1.800-1.200z" fill="#d6d6d6" stroke="#d6d6d6" stroke-width=".8"/></svg><svg style="left:28px;top:578px" width="4" height="4" viewBox="0 0 4 4"><path d="M4 0v4H0z" fill="#b0b0b0"/></svg>
<div class="a" style="left:10px;top:621px;width:5px;height:5px;border-radius:3px;background:#d6d6d6"></div><div class="a" style="left:16.500px;top:621px;width:5px;height:5px;border-radius:3px;background:#d6d6d6"></div><div class="a" style="left:23px;top:621px;width:5px;height:5px;border-radius:3px;background:#d6d6d6"></div><svg style="left:28px;top:630px" width="4" height="4" viewBox="0 0 4 4"><path d="M4 0v4H0z" fill="#b0b0b0"/></svg>
<div class="a" style="left:7px;top:646px;width:7px;height:7px;background:#e6e6e6"></div><div class="a" style="left:4px;top:643px;width:7px;height:7px;background:#000;border:1px solid #d6d6d6"></div>
<svg style="left:22px;top:642px" width="11" height="11" viewBox="0 0 11 11"><path d="M2.500 2.500h5.500v5.500" stroke="#d6d6d6" stroke-width="1.500" fill="none"/><path d="M0 2.500l3-2.500v5zM8 11l-2.700-3.200h5.400z" fill="#d6d6d6"/></svg>
<div class="a" style="left:14px;top:668px;width:20px;height:20px;background:#fff;border:1px solid #fff"></div>
<div class="a" style="left:4px;top:658px;width:20px;height:20px;background:#414141;border:1px solid #f2f2f2;box-shadow:0 0 0 1px #535353"></div>
<svg style="left:10px;top:698px" width="18" height="14" viewBox="0 0 18 14"><rect x=".7" y=".7" width="16.600" height="12.600" stroke="#d6d6d6" stroke-width="1.400" fill="#5a5a5a"/><circle cx="9" cy="7" r="3.700" stroke="#e6e6e6" stroke-width="1.100" stroke-dasharray="1.200 1.200" fill="none"/></svg>
<svg style="left:10px;top:725px" width="18" height="14" viewBox="0 0 18 14"><rect x="6" y=".7" width="11.300" height="8.600" stroke="#d6d6d6" stroke-width="1.400" fill="#6a6a6a"/><rect x=".7" y="4.500" width="11.300" height="8.600" stroke="#d6d6d6" stroke-width="1.400" fill="#535353"/></svg><svg style="left:28px;top:738px" width="4" height="4" viewBox="0 0 4 4"><path d="M4 0v4H0z" fill="#b0b0b0"/></svg>
<!-- ===== collapsed dock icons ===== -->
<div class="a bd" style="left:1387px;top:115px;width:37px;height:1px"></div><div class="a bd" style="left:1387px;top:155px;width:37px;height:1px"></div>
<div class="a" style="left:1397px;top:79px;width:18px;height:3px;background:repeating-linear-gradient(90deg,#464646 0 1px,#535353 1px 2px)"></div>
<div class="a" style="left:1397px;top:120px;width:18px;height:3px;background:repeating-linear-gradient(90deg,#464646 0 1px,#535353 1px 2px)"></div>
<svg style="left:1400px;top:90px" width="16" height="17" viewBox="0 0 16 17"><rect x=".6" y=".6" width="3.800" height="3.800" fill="none" stroke="#d6d6d6" stroke-width="1.200"/><rect x=".6" y="6.400" width="3.800" height="3.800" fill="none" stroke="#d6d6d6" stroke-width="1.200"/><rect x="0" y="11.800" width="5" height="5" fill="#d6d6d6"/><path d="M8.500 14.500c4.500-2 5.500-6.500 3.200-10.500" fill="none" stroke="#d6d6d6" stroke-width="1.900"/><path d="M7.500 3.800l6.800-2.300-2 5.300z" fill="#d6d6d6"/></svg>
<svg style="left:1397px;top:129px" width="21" height="20" viewBox="0 0 21 20"><path d="M1 1.800L8.500 1 20 18.200 13.500 19z M1.500 2v8.500h4 M13.300 9.500h6.200V18.500 M13.300 9.500V18.800 M14 10l5 6" fill="none" stroke="#d6d6d6" stroke-width="1.300"/></svg>
<!-- ===== swatches panel ===== -->
<div class="a bg2" style="left:1427px;top:75px;width:250px;height:28px"></div>
<div class="a" style="left:1427px;top:76px;width:41px;height:27px;background:#4a4a4a"></div>
<div class="a bd" style="left:1467px;top:76px;width:1px;height:27px"></div>
<div class="a bg1" style="left:1468px;top:75px;width:41px;height:29px"></div>
<div class="a bd" style="left:1509px;top:76px;width:1px;height:27px"></div>
<div class="t" style="left:1436px;top:81px;color:#a9a9a9">颜色</div>
<div class="t" style="left:1477px;top:81px;color:#f0f0f0">色板</div>
<svg style="left:1661px;top:85px" width="10" height="8" viewBox="0 0 10 8"><path d="M0 .6h10M0 2.900h10M0 5.200h10M0 7.500h10" stroke="#c4c4c4" stroke-width="1"/></svg>
<div class="a" style="left:1431px;top:111px;width:228px;height:1px;background:#4b4b4b"></div>
<div class="a" style="left:1431px;top:129px;width:228px;height:1px;background:#4b4b4b"></div>
<div class="a" style="left:1433px;top:112.5px;width:15px;height:15.5px;background:#4d4d4d"></div>
<div class="a" style="left:1449px;top:112.5px;width:15px;height:15.5px;background:#3c3c3c"></div>
<div class="a" style="left:1465px;top:112.5px;width:15px;height:15.5px;background:#050505"></div>
<div class="a" style="left:1481px;top:112.5px;width:15px;height:15.5px;background:#170404"></div>
<div class="a" style="left:1497px;top:112.5px;width:15px;height:15.5px;background:#878282"></div>
<div class="a" style="left:1513px;top:112.5px;width:15px;height:15.5px;background:#000000"></div>
<div class="a" style="left:1529px;top:112.5px;width:15px;height:15.5px;background:#ffffff"></div>
<div class="a" style="left:1427px;top:133px;width:234px;height:115px;background:#3a3a3a;overflow:hidden">
<div class="a" style="left:0px;top:1px;width:17px;height:17px;background:#ff0000"></div>
<div class="a" style="left:18px;top:1px;width:17px;height:17px;background:#ffff00"></div>
<div class="a" style="left:36px;top:1px;width:17px;height:17px;background:#00ff00"></div>
<div class="a" style="left:54px;top:1px;width:17px;height:17px;background:#00ffff"></div>
<div class="a" style="left:72px;top:1px;width:17px;height:17px;background:#0000ff"></div>
<div class="a" style="left:90px;top:1px;width:17px;height:17px;background:#ff00ff"></div>
<div class="a" style="left:108px;top:1px;width:17px;height:17px;background:#ffffff"></div>
<div class="a" style="left:126px;top:1px;width:17px;height:17px;background:#ececec"></div>
<div class="a" style="left:144px;top:1px;width:17px;height:17px;background:#e6e6e6"></div>
<div class="a" style="left:162px;top:1px;width:17px;height:17px;background:#e0e0e0"></div>
<div class="a" style="left:180px;top:1px;width:17px;height:17px;background:#dadada"></div>
<div class="a" style="left:198px;top:1px;width:17px;height:17px;background:#d4d4d4"></div>
<div class="a" style="left:216px;top:1px;width:17px;height:17px;background:#cccccc"></div>
<div class="a" style="left:0px;top:19px;width:17px;height:17px;background:#c4c4c4"></div>
<div class="a" style="left:18px;top:19px;width:17px;height:17px;background:#b8b8b8"></div>
<div class="a" style="left:36px;top:19px;width:17px;height:17px;background:#adadad"></div>
<div class="a" style="left:54px;top:19px;width:17px;height:17px;background:#e60012"></div>
<div class="a" style="left:72px;top:19px;width:17px;height:17px;background:#fff100"></div>
<div class="a" style="left:90px;top:19px;width:17px;height:17px;background:#009944"></div>
<div class="a" style="left:108px;top:19px;width:17px;height:17px;background:#00a0e9"></div>
<div class="a" style="left:126px;top:19px;width:17px;height:17px;background:#1d2088"></div>
<div class="a" style="left:144px;top:19px;width:17px;height:17px;background:#e4007f"></div>
<div class="a" style="left:162px;top:19px;width:17px;height:17px;background:#969696"></div>
<div class="a" style="left:180px;top:19px;width:17px;height:17px;background:#8a8a8a"></div>
<div class="a" style="left:198px;top:19px;width:17px;height:17px;background:#7e7e7e"></div>
<div class="a" style="left:216px;top:19px;width:17px;height:17px;background:#717171"></div>
<div class="a" style="left:0px;top:37px;width:17px;height:17px;background:#636363"></div>
<div class="a" style="left:18px;top:37px;width:17px;height:17px;background:#565656"></div>
<div class="a" style="left:36px;top:37px;width:17px;height:17px;background:#484848"></div>
<div class="a" style="left:54px;top:37px;width:17px;height:17px;background:#383838"></div>
<div class="a" style="left:72px;top:37px;width:17px;height:17px;background:#262626"></div>
<div class="a" style="left:90px;top:37px;width:17px;height:17px;background:#000000"></div>
<div class="a" style="left:108px;top:37px;width:17px;height:17px;background:#f29b76"></div>
<div class="a" style="left:126px;top:37px;width:17px;height:17px;background:#f6b37f"></div>
<div class="a" style="left:144px;top:37px;width:17px;height:17px;background:#facd89"></div>
<div class="a" style="left:162px;top:37px;width:17px;height:17px;background:#fff799"></div>
<div class="a" style="left:180px;top:37px;width:17px;height:17px;background:#cce198"></div>
<div class="a" style="left:198px;top:37px;width:17px;height:17px;background:#acd598"></div>
<div class="a" style="left:216px;top:37px;width:17px;height:17px;background:#89c997"></div>
<div class="a" style="left:0px;top:55px;width:17px;height:17px;background:#84ccc9"></div>
<div class="a" style="left:18px;top:55px;width:17px;height:17px;background:#7ecef4"></div>
<div class="a" style="left:36px;top:55px;width:17px;height:17px;background:#88abda"></div>
<div class="a" style="left:54px;top:55px;width:17px;height:17px;background:#8c97cb"></div>
<div class="a" style="left:72px;top:55px;width:17px;height:17px;background:#8f82bc"></div>
<div class="a" style="left:90px;top:55px;width:17px;height:17px;background:#aa89bd"></div>
<div class="a" style="left:108px;top:55px;width:17px;height:17px;background:#c490bf"></div>
<div class="a" style="left:126px;top:55px;width:17px;height:17px;background:#f19ec2"></div>
<div class="a" style="left:144px;top:55px;width:17px;height:17px;background:#f29c9f"></div>
<div class="a" style="left:162px;top:55px;width:17px;height:17px;background:#ec6941"></div>
<div class="a" style="left:180px;top:55px;width:17px;height:17px;background:#f19149"></div>
<div class="a" style="left:198px;top:55px;width:17px;height:17px;background:#f8b551"></div>
<div class="a" style="left:216px;top:55px;width:17px;height:17px;background:#fff45c"></div>
<div class="a" style="left:0px;top:73px;width:17px;height:17px;background:#b3d465"></div>
<div class="a" style="left:18px;top:73px;width:17px;height:17px;background:#80c269"></div>
<div class="a" style="left:36px;top:73px;width:17px;height:17px;background:#32b16c"></div>
<div class="a" style="left:54px;top:73px;width:17px;height:17px;background:#13b5b1"></div>
<div class="a" style="left:72px;top:73px;width:17px;height:17px;background:#00b7ee"></div>
<div class="a" style="left:90px;top:73px;width:17px;height:17px;background:#448aca"></div>
<div class="a" style="left:108px;top:73px;width:17px;height:17px;background:#556fb5"></div>
<div class="a" style="left:126px;top:73px;width:17px;height:17px;background:#5f52a0"></div>
<div class="a" style="left:144px;top:73px;width:17px;height:17px;background:#8957a1"></div>
<div class="a" style="left:162px;top:73px;width:17px;height:17px;background:#ae5da1"></div>
<div class="a" style="left:180px;top:73px;width:17px;height:17px;background:#ea68a2"></div>
<div class="a" style="left:198px;top:73px;width:17px;height:17px;background:#eb6877"></div>
<div class="a" style="left:216px;top:73px;width:17px;height:17px;background:#e60012"></div>
<div class="a" style="left:0px;top:91px;width:17px;height:17px;background:#eb6100"></div>
<div class="a" style="left:18px;top:91px;width:17px;height:17px;background:#f39800"></div>
<div class="a" style="left:36px;top:91px;width:17px;height:17px;background:#fff100"></div>
<div class="a" style="left:54px;top:91px;width:17px;height:17px;background:#8fc31f"></div>
<div class="a" style="left:72px;top:91px;width:17px;height:17px;background:#22ac38"></div>
<div class="a" style="left:90px;top:91px;width:17px;height:17px;background:#009944"></div>
<div class="a" style="left:108px;top:91px;width:17px;height:17px;background:#009e96"></div>
<div class="a" style="left:126px;top:91px;width:17px;height:17px;background:#00a0e9"></div>
<div class="a" style="left:144px;top:91px;width:17px;height:17px;background:#0068b7"></div>
<div class="a" style="left:162px;top:91px;width:17px;height:17px;background:#00479d"></div>
<div class="a" style="left:180px;top:91px;width:17px;height:17px;background:#1d2088"></div>
<div class="a" style="left:198px;top:91px;width:17px;height:17px;background:#601986"></div>
<div class="a" style="left:216px;top:91px;width:17px;height:17px;background:#920783"></div>
<div class="a" style="left:0px;top:109px;width:17px;height:17px;background:#e4007f"></div>
<div class="a" style="left:18px;top:109px;width:17px;height:17px;background:#e5004f"></div>
<div class="a" style="left:36px;top:109px;width:17px;height:17px;background:#a40000"></div>
<div class="a" style="left:54px;top:109px;width:17px;height:17px;background:#a84200"></div>
<div class="a" style="left:72px;top:109px;width:17px;height:17px;background:#ac6a00"></div>
<div class="a" style="left:90px;top:109px;width:17px;height:17px;background:#b7aa00"></div>
<div class="a" style="left:108px;top:109px;width:17px;height:17px;background:#638c0b"></div>
<div class="a" style="left:126px;top:109px;width:17px;height:17px;background:#097c25"></div>
<div class="a" style="left:144px;top:109px;width:17px;height:17px;background:#007130"></div>
<div class="a" style="left:162px;top:109px;width:17px;height:17px;background:#00736d"></div>
<div class="a" style="left:180px;top:109px;width:17px;height:17px;background:#0075a9"></div>
<div class="a" style="left:198px;top:109px;width:17px;height:17px;background:#004986"></div>
<div class="a" style="left:216px;top:109px;width:17px;height:17px;background:#002e73"></div>
</div>
<div class="a" style="left:1661px;top:133px;width:16px;height:115px;background:#4d4d4d"></div>
<div class="a" style="left:1664px;top:151px;width:10px;height:51px;background:#6a6a6a;border-radius:1px"></div>
<svg style="left:1664px;top:142px" width="10" height="6" viewBox="0 0 10 6"><path d="M1 5l4-3.800 4 3.800" fill="none" stroke="#8a8a8a" stroke-width="1.200"/></svg>
<svg style="left:1664px;top:234px" width="10" height="6" viewBox="0 0 10 6"><path d="M1 1l4 3.800 4-3.800" fill="none" stroke="#8a8a8a" stroke-width="1.200"/></svg>
<svg style="left:1608px;top:255px" width="11" height="11" viewBox="0 0 11 11"><path d="M.8.800h9.400v9.400H4.500L.8 6.500z" fill="none" stroke="#cfcfcf" stroke-width="1.300"/><path d="M.8 6.500h3.700v3.700z" fill="#cfcfcf"/></svg>
<svg style="left:1636px;top:254px" width="11" height="13" viewBox="0 0 11 13"><path d="M0 2.500h11M3.500 2.500V.8h4v1.700M1.300 2.500l.5 9.800h7.400l.5-9.800M3.800 4.500v6M5.500 4.500v6M7.200 4.500v6" fill="none" stroke="#9d9d9d" stroke-width="1.100"/></svg>
<div class="a bd" style="left:1427px;top:273px;width:250px;height:4px"></div>
<!-- ===== properties panel ===== -->
<div class="a bg2" style="left:1427px;top:277px;width:250px;height:27px"></div>
<div class="a bg1" style="left:1427px;top:277px;width:41px;height:28px"></div>
<div class="a bd" style="left:1468px;top:278px;width:1px;height:26px"></div>
<div class="a" style="left:1469px;top:278px;width:40px;height:26px;background:#4a4a4a"></div>
<div class="a bd" style="left:1509px;top:278px;width:1px;height:26px"></div>
<div class="t" style="left:1436px;top:282px;color:#f0f0f0">属性</div>
<div class="t" style="left:1477px;top:282px;color:#a9a9a9">调整</div>
<svg style="left:1661px;top:286px" width="10" height="8" viewBox="0 0 10 8"><path d="M0 .6h10M0 2.900h10M0 5.200h10M0 7.500h10" stroke="#c4c4c4" stroke-width="1"/></svg>
<div class="a" style="left:1438px;top:311px;width:22px;height:21px;background:#3a3a3a;border-radius:2px"></div>
<svg style="left:1442px;top:315px" width="14" height="12" viewBox="0 0 14 12"><rect x=".6" y=".6" width="12.800" height="10.800" fill="none" stroke="#e0e0e0" stroke-width="1.200"/><path d="M1.500 10.500V8l2-2.500 1.500 1.500 1.500-3 2 3.500 1.500-1.500 2.500 2v2.500z" fill="#e0e0e0"/><rect x="10" y="2.300" width="1.800" height="1.800" fill="#e0e0e0"/></svg>
<div class="t" style="left:1467px;top:314px;color:#e6e6e6">像素图层属性</div>
<div class="a" style="left:1427px;top:337px;width:250px;height:1px;background:#464646"></div>
<div class="a" style="left:1662px;top:338px;width:15px;height:156px;background:#4d4d4d"></div>
<div class="t" style="left:1438px;top:350px;color:#c9c9c9">W:</div>
<div class="inp" style="left:1458px;top:349px;width:62px;height:18px"></div><div class="t" style="left:1460px;top:350px;color:#e8e8e8;font-size:11.5px">24.69 厘米</div>
<div class="a" style="left:1528px;top:345px;width:24px;height:25px;background:#383838"></div>
<svg style="left:1532px;top:352px" width="16" height="9" viewBox="0 0 16 9"><rect x=".7" y=".7" width="8.500" height="6.600" rx="3.300" fill="none" stroke="#cfcfcf" stroke-width="1.300"/><rect x="6.800" y=".7" width="8.500" height="6.600" rx="3.300" fill="none" stroke="#cfcfcf" stroke-width="1.300"/><path d="M4.500 4h7" stroke="#cfcfcf" stroke-width="1.300"/></svg>
<div class="t" style="left:1564px;top:350px;color:#c9c9c9">H:</div>
<div class="inp" style="left:1581px;top:349px;width:62px;height:18px"></div><div class="t" style="left:1583px;top:350px;color:#e8e8e8;font-size:11.5px">24.69 厘米</div>
<div class="t" style="left:1442px;top:377px;color:#c9c9c9">X:</div>
<div class="inp" style="left:1458px;top:376px;width:62px;height:18px"></div><div class="t" style="left:1460px;top:377px;color:#e8e8e8;font-size:11.5px">0 厘米</div>
<div class="t" style="left:1566px;top:377px;color:#c9c9c9">Y:</div>
<div class="inp" style="left:1581px;top:376px;width:62px;height:18px"></div><div class="t" style="left:1583px;top:377px;color:#e8e8e8;font-size:11.5px">0 厘米</div>
<div class="a bd" style="left:1427px;top:521px;width:250px;height:3px"></div>
<!-- ===== layers panel ===== -->
<div class="a bg2" style="left:1427px;top:524px;width:250px;height:28px"></div>
<div class="a bg1" style="left:1427px;top:524px;width:41px;height:29px"></div>
<div class="a bd" style="left:1468px;top:525px;width:1px;height:27px"></div>
<div class="a" style="left:1469px;top:525px;width:40px;height:27px;background:#4a4a4a"></div>
<div class="a bd" style="left:1509px;top:525px;width:1px;height:27px"></div>
<div class="a" style="left:1510px;top:525px;width:41px;height:27px;background:#4a4a4a"></div>
<div class="a bd" style="left:1551px;top:525px;width:1px;height:27px"></div>
<div class="t" style="left:1436px;top:530px;color:#f0f0f0">图层</div>
<div class="t" style="left:1477px;top:530px;color:#a9a9a9">通道</div>
<div class="t" style="left:1519px;top:530px;color:#a9a9a9">路径</div>
<svg style="left:1661px;top:534px" width="10" height="8" viewBox="0 0 10 8"><path d="M0 .6h10M0 2.900h10M0 5.200h10M0 7.500h10" stroke="#c4c4c4" stroke-width="1"/></svg>
<div class="dd" style="left:1431px;top:560px;width:86px;height:19px;background:#474747"></div>
<svg style="left:1437px;top:563px" width="12" height="12" viewBox="0 0 12 12"><circle cx="7.300" cy="4.700" r="3.500" fill="none" stroke="#d6d6d6" stroke-width="1.400"/><path d="M4.800 7.200L1 11" stroke="#d6d6d6" stroke-width="1.800"/></svg>
<div class="t" style="left:1453px;top:562.5px;color:#e6e6e6">类型</div>
<svg style="left:1505px;top:567px" width="9" height="6" viewBox="0 0 9 6"><path d="M0.700 0.800l3.800 3.800 3.800-3.800" fill="none" stroke-width="1.200" stroke="#c9c9c9"/></svg>
<svg style="left:1532px;top:564px" width="14" height="11" viewBox="0 0 14 11"><rect x=".6" y=".6" width="12.800" height="9.800" fill="none" stroke="#d6d6d6" stroke-width="1.200"/><path d="M2.500 8.500l3-3.500 2 2.500 1.500-1.500 2.500 2.500z" fill="#d6d6d6"/></svg>
<svg style="left:1558px;top:564px" width="12" height="12" viewBox="0 0 12 12"><circle cx="6" cy="6" r="5" fill="none" stroke="#d6d6d6" stroke-width="1.300"/><path d="M2.500 9.500A5 5 0 009.500 2.500z" fill="#d6d6d6"/></svg>
<div class="t" style="left:1582px;top:562px;font-family:'Liberation Serif',serif;font-weight:bold;font-size:15px;color:#d6d6d6">T</div>
<svg style="left:1605px;top:564px" width="13" height="12" viewBox="0 0 13 12"><rect x="2" y="2" width="9" height="8" fill="none" stroke="#d6d6d6" stroke-width="1.200"/><rect x="0" y="0" width="3.500" height="3.500" fill="#d6d6d6"/><rect x="9.500" y="0" width="3.500" height="3.500" fill="#d6d6d6"/><rect x="0" y="8.500" width="3.500" height="3.500" fill="#d6d6d6"/><rect x="9.500" y="8.500" width="3.500" height="3.500" fill="#d6d6d6"/></svg>
<svg style="left:1630px;top:563px" width="12" height="14" viewBox="0 0 12 14"><path d="M3.500 5V.7h5l2.800 2.800V12H6" fill="none" stroke="#d6d6d6" stroke-width="1.200"/><path d="M8 .7v3.300h3.300" fill="none" stroke="#d6d6d6" stroke-width="1.200"/><rect x="0" y="7" width="6" height="6.500" fill="#d6d6d6"/></svg>
<div class="a" style="left:1658px;top:561px;width:10px;height:17px;border-radius:5px;background:#3e3e3e"></div><div class="a" style="left:1658.500px;top:561px;width:9px;height:9px;border-radius:5px;background:#e0e0e0"></div>
<div class="a" style="left:1427px;top:583px;width:250px;height:1px;background:#474747"></div>
<div class="dd" style="left:1431px;top:587px;width:117px;height:19px;background:#474747"></div>
<div class="t" style="left:1440px;top:590px;color:#e6e6e6">正常</div>
<svg style="left:1536px;top:594px" width="9" height="6" viewBox="0 0 9 6"><path d="M0.700 0.800l3.800 3.800 3.800-3.800" fill="none" stroke-width="1.200" stroke="#c9c9c9"/></svg>
<div class="t" style="left:1557px;top:590px;color:#e0e0e0">不透明度:</div>
<div class="dd" style="left:1613px;top:587px;width:54px;height:19px;background:#474747"></div><div class="a" style="left:1651px;top:588px;width:1px;height:17px;background:#5e5e5e"></div>
<div class="t" style="left:1616px;top:590px;color:#e8e8e8;font-size:11.500px">100%</div>
<svg style="left:1655px;top:594px" width="9" height="6" viewBox="0 0 9 6"><path d="M0.700 0.800l3.800 3.800 3.800-3.800" fill="none" stroke-width="1.200" stroke="#c9c9c9"/></svg>
<div class="a" style="left:1427px;top:610px;width:250px;height:1px;background:#474747"></div>
<div class="t" style="left:1434px;top:616px;color:#d0d0d0">锁定:</div>
<svg style="left:1471px;top:618px" width="11" height="11" viewBox="0 0 11 11"><rect x=".5" y=".5" width="10" height="10" fill="none" stroke="#d6d6d6" stroke-width="1"/><path d="M1 1h3v3H1zM7 1h3v3H7zM4 4h3v3H4zM1 7h3v3H1zM7 7h3v3H7z" fill="#d6d6d6"/></svg>
<svg style="left:1492px;top:617px" width="13" height="13" viewBox="0 0 13 13"><path d="M12 .8c-3 2-5 4-6.500 6.500l1.500 1.200c2.200-2.200 4-4.500 5-7.700zM5 8c-2 0-2.300 2-4.300 3.500 2.500.6 5-.3 5.400-2.300z" fill="#d6d6d6"/></svg>
<svg style="left:1514px;top:617px" width="13" height="13" viewBox="0 0 13 13"><path d="M6.500 1.500v10M1.500 6.500h10" stroke="#d6d6d6" stroke-width="1.200" fill="none"/><path d="M6.500 0l2.200 2.700H4.300zM6.500 13l2.200-2.700H4.300zM0 6.500l2.700-2.200v4.400zM13 6.500l-2.700-2.200v4.400z" fill="#d6d6d6"/></svg>
<svg style="left:1536px;top:617px" width="14" height="13" viewBox="0 0 14 13"><path d="M3 0v10.500h11M0 3h8.500l2.500 2.500v7.500" fill="none" stroke="#d6d6d6" stroke-width="1.200" stroke-dasharray="3 0"/><path d="M8.500 3v2.500H11" fill="none" stroke="#d6d6d6" stroke-width="1"/></svg>
<svg style="left:1560px;top:617px" width="10" height="13" viewBox="0 0 10 13"><path d="M2.500 6V3.500a2.500 2.500 0 015 0V6" fill="none" stroke="#d6d6d6" stroke-width="1.500"/><rect x="0" y="5.500" width="10" height="7" rx="1" fill="#d6d6d6"/><circle cx="5" cy="9" r="1.200" fill="#535353"/></svg>
<div class="t" style="left:1581px;top:616px;color:#e0e0e0">填充:</div>
<div class="dd" style="left:1613px;top:615px;width:54px;height:18px;background:#474747"></div><div class="a" style="left:1651px;top:616px;width:1px;height:16px;background:#5e5e5e"></div>
<div class="t" style="left:1616px;top:616px;color:#e8e8e8;font-size:11.500px">100%</div>
<svg style="left:1655px;top:621px" width="9" height="6" viewBox="0 0 9 6"><path d="M0.700 0.800l3.800 3.800 3.800-3.800" fill="none" stroke-width="1.200" stroke="#c9c9c9"/></svg>
<div class="a" style="left:1427px;top:636px;width:250px;height:378px;overflow:hidden">
<div class="a" style="left:0;top:-12px;width:236px;height:39px;border-bottom:1px solid #444">
<div class="a" style="left:30px;top:0;width:1px;height:38px;background:#474747"></div>
<div class="a" style="left:9px;top:13px;width:12px;height:12px;background:#505050;border:1px solid #494949;border-right-color:#5c5c5c;border-bottom-color:#5c5c5c"></div>
<svg style="left:34px;top:3px" width="32" height="32" viewBox="-.5 -.5 32 32"><rect x="0" y="0" width="31" height="31" fill="#fff" stroke="#2a2a2a" stroke-width="1"/><ellipse cx="14.500" cy="7.500" rx="3.600" ry="3.300" fill="#fff" stroke="#3a3a3a" stroke-width="1"/><path d="M10 3.500l2.200 1.500-1.200 2zM19.500 3.300l-2.500 1.700 1.500 2z" fill="#444"/><path d="M10.500 6c-2 2-2 4-3 6s0 4-1 6M8.500 8c-1.500 3 0 5-1 8M19 6c2 2 2 4 3.500 6s-.5 4 .5 6M21 8.500c1.500 3 0 5 1.500 7.500M12.500 11.500L7.500 9l-1.500 1M17 11.500l5.500-2 1.500 1.500M12.500 11l-1 9.500M17 11l1 9.500M13.500 12l1 4 1-4" fill="none" stroke="#4a4a4a" stroke-width=".9"/><circle cx="13.200" cy="7.800" r=".8" fill="#222"/><circle cx="16" cy="7.900" r=".7" fill="#222"/><path d="M11 20h7.500l.5 2.300h-8.500z" fill="#555"/><path d="M12 22.300h2.500l-.3 8h-2.600zM15.200 22.300h2.300v8h-2.100z" fill="#555"/></svg>
<div class="t" style="left:76px;top:12px;color:#e8e8e8">图层 10</div>
</div>
<div class="a" style="left:0;top:27px;width:236px;height:39px;border-bottom:1px solid #444">
<div class="a" style="left:30px;top:0;width:1px;height:38px;background:#474747"></div>
<div class="a" style="left:9px;top:13px;width:12px;height:12px;background:#505050;border:1px solid #494949;border-right-color:#5c5c5c;border-bottom-color:#5c5c5c"></div>
<svg style="left:34px;top:3px" width="32" height="32" viewBox="-.5 -.5 32 32"><rect x="0" y="0" width="31" height="31" fill="#fff" stroke="#2a2a2a" stroke-width="1"/><ellipse cx="14.500" cy="7.500" rx="3.600" ry="3.300" fill="#fff" stroke="#3a3a3a" stroke-width="1"/><path d="M10 3.500l2.200 1.500-1.200 2zM19.500 3.300l-2.500 1.700 1.500 2z" fill="#444"/><path d="M10.500 6c-2 2-2 4-3 6s0 4-1 6M8.500 8c-1.500 3 0 5-1 8M19 6c2 2 2 4 3.500 6s-.5 4 .5 6M21 8.500c1.500 3 0 5 1.500 7.500M12.500 11.500L7.500 9l-1.500 1M17 11.500l5.500-2 1.500 1.500M12.500 11l-1 9.500M17 11l1 9.500M13.500 12l1 4 1-4" fill="none" stroke="#4a4a4a" stroke-width=".9"/><circle cx="13.200" cy="7.800" r=".8" fill="#222"/><circle cx="16" cy="7.900" r=".7" fill="#222"/><path d="M11 20h7.500l.5 2.300h-8.500z" fill="#555"/><path d="M12 22.300h2.500l-.3 8h-2.600zM15.200 22.300h2.300v8h-2.100z" fill="#555"/></svg>
<div class="t" style="left:76px;top:12px;color:#e8e8e8">图层 9</div>
</div>
<div class="a" style="left:0;top:66px;width:236px;height:39px;border-bottom:1px solid #444">
<div class="a" style="left:30px;top:0;width:1px;height:38px;background:#474747"></div>
<div class="a" style="left:9px;top:13px;width:12px;height:12px;background:#505050;border:1px solid #494949;border-right-color:#5c5c5c;border-bottom-color:#5c5c5c"></div>
<svg style="left:34px;top:3px" width="32" height="32" viewBox="-.5 -.5 32 32"><rect x="0" y="0" width="31" height="31" fill="#fff" stroke="#2a2a2a" stroke-width="1"/><ellipse cx="14.500" cy="7.500" rx="3.600" ry="3.300" fill="#fff" stroke="#3a3a3a" stroke-width="1"/><path d="M10 3.500l2.200 1.500-1.200 2zM19.500 3.300l-2.500 1.700 1.500 2z" fill="#444"/><path d="M10.500 6c-2 2-2 4-3 6s0 4-1 6M8.500 8c-1.500 3 0 5-1 8M19 6c2 2 2 4 3.500 6s-.5 4 .5 6M21 8.500c1.500 3 0 5 1.500 7.500M12.500 11.500L7.500 9l-1.500 1M17 11.500l5.500-2 1.500 1.500M12.500 11l-1 9.500M17 11l1 9.500M13.500 12l1 4 1-4" fill="none" stroke="#4a4a4a" stroke-width=".9"/><circle cx="13.200" cy="7.800" r=".8" fill="#222"/><circle cx="16" cy="7.900" r=".7" fill="#222"/><path d="M11 20h7.500l.5 2.300h-8.500z" fill="#555"/><path d="M12 22.300h2.500l-.3 8h-2.600zM15.200 22.300h2.300v8h-2.100z" fill="#555"/></svg>
<div class="t" style="left:76px;top:12px;color:#e8e8e8">图层 8</div>
</div>
<div class="a" style="left:0;top:105px;width:236px;height:39px;border-bottom:1px solid #444">
<div class="a" style="left:30px;top:0;width:1px;height:38px;background:#474747"></div>
<div class="a" style="left:9px;top:13px;width:12px;height:12px;background:#505050;border:1px solid #494949;border-right-color:#5c5c5c;border-bottom-color:#5c5c5c"></div>
<svg style="left:34px;top:3px" width="32" height="32" viewBox="-.5 -.5 32 32"><rect x="0" y="0" width="31" height="31" fill="#fff" stroke="#2a2a2a" stroke-width="1"/><ellipse cx="14.500" cy="7.500" rx="3.600" ry="3.300" fill="#fff" stroke="#3a3a3a" stroke-width="1"/><path d="M10 3.500l2.200 1.500-1.200 2zM19.500 3.300l-2.500 1.700 1.500 2z" fill="#444"/><path d="M10.500 6c-2 2-2 4-3 6s0 4-1 6M8.500 8c-1.500 3 0 5-1 8M19 6c2 2 2 4 3.500 6s-.5 4 .5 6M21 8.500c1.500 3 0 5 1.500 7.500M12.500 11.500L7.500 9l-1.500 1M17 11.500l5.500-2 1.500 1.500M12.500 11l-1 9.500M17 11l1 9.500M13.500 12l1 4 1-4" fill="none" stroke="#4a4a4a" stroke-width=".9"/><circle cx="13.200" cy="7.800" r=".8" fill="#222"/><circle cx="16" cy="7.900" r=".7" fill="#222"/><path d="M11 20h7.500l.5 2.300h-8.500z" fill="#555"/><path d="M12 22.300h2.500l-.3 8h-2.600zM15.200 22.300h2.300v8h-2.100z" fill="#555"/></svg>
<div class="t" style="left:76px;top:12px;color:#e8e8e8">图层 7</div>
</div>
<div class="a" style="left:0;top:144px;width:236px;height:39px;border-bottom:1px solid #444">
<div class="a" style="left:30px;top:0;width:1px;height:38px;background:#474747"></div>
<div class="a" style="left:9px;top:13px;width:12px;height:12px;background:#505050;border:1px solid #494949;border-right-color:#5c5c5c;border-bottom-color:#5c5c5c"></div>
<svg style="left:34px;top:3px" width="32" height="32" viewBox="-.5 -.5 32 32"><rect x="0" y="0" width="31" height="31" fill="#fff" stroke="#2a2a2a" stroke-width="1"/><ellipse cx="14.500" cy="7.500" rx="3.600" ry="3.300" fill="#fff" stroke="#3a3a3a" stroke-width="1"/><path d="M10 3.500l2.200 1.500-1.200 2zM19.500 3.300l-2.500 1.700 1.500 2z" fill="#444"/><path d="M10.500 6c-2 2-2 4-3 6s0 4-1 6M8.500 8c-1.500 3 0 5-1 8M19 6c2 2 2 4 3.500 6s-.5 4 .5 6M21 8.500c1.500 3 0 5 1.500 7.500M12.500 11.500L7.500 9l-1.500 1M17 11.500l5.500-2 1.500 1.500M12.500 11l-1 9.500M17 11l1 9.500M13.500 12l1 4 1-4" fill="none" stroke="#4a4a4a" stroke-width=".9"/><circle cx="13.200" cy="7.800" r=".8" fill="#222"/><circle cx="16" cy="7.900" r=".7" fill="#222"/><path d="M11 20h7.500l.5 2.300h-8.500z" fill="#555"/><path d="M12 22.300h2.500l-.3 8h-2.600zM15.200 22.300h2.300v8h-2.100z" fill="#555"/></svg>
<div class="t" style="left:76px;top:12px;color:#e8e8e8">图层 6</div>
</div>
<div class="a" style="left:0;top:183px;width:236px;height:39px;border-bottom:1px solid #444">
<div class="a" style="left:30px;top:0;width:1px;height:38px;background:#474747"></div>
<div class="a" style="left:9px;top:13px;width:12px;height:12px;background:#505050;border:1px solid #494949;border-right-color:#5c5c5c;border-bottom-color:#5c5c5c"></div>
<svg style="left:34px;top:3px" width="32" height="32" viewBox="-.5 -.5 32 32"><rect x="0" y="0" width="31" height="31" fill="#fff" stroke="#2a2a2a" stroke-width="1"/><ellipse cx="14.500" cy="7.500" rx="3.600" ry="3.300" fill="#fff" stroke="#3a3a3a" stroke-width="1"/><path d="M10 3.500l2.200 1.500-1.200 2zM19.500 3.300l-2.500 1.700 1.500 2z" fill="#444"/><path d="M10.500 6c-2 2-2 4-3 6s0 4-1 6M8.500 8c-1.500 3 0 5-1 8M19 6c2 2 2 4 3.500 6s-.5 4 .5 6M21 8.500c1.500 3 0 5 1.500 7.500M12.500 11.500L7.500 9l-1.500 1M17 11.500l5.500-2 1.500 1.500M12.500 11l-1 9.500M17 11l1 9.500M13.500 12l1 4 1-4" fill="none" stroke="#4a4a4a" stroke-width=".9"/><circle cx="13.200" cy="7.800" r=".8" fill="#222"/><circle cx="16" cy="7.900" r=".7" fill="#222"/><path d="M11 20h7.500l.5 2.300h-8.500z" fill="#555"/><path d="M12 22.300h2.500l-.3 8h-2.600zM15.200 22.300h2.300v8h-2.100z" fill="#555"/></svg>
<div class="t" style="left:76px;top:12px;color:#e8e8e8">图层 5</div>
</div>
<div class="a" style="left:0;top:222px;width:236px;height:39px;border-bottom:1px solid #444">
<div class="a" style="left:30px;top:0;width:1px;height:38px;background:#474747"></div>
<div class="a" style="left:9px;top:13px;width:12px;height:12px;background:#505050;border:1px solid #494949;border-right-color:#5c5c5c;border-bottom-color:#5c5c5c"></div>
<svg style="left:34px;top:3px" width="32" height="32" viewBox="-.5 -.5 32 32"><rect x="0" y="0" width="31" height="31" fill="#fff" stroke="#2a2a2a" stroke-width="1"/><ellipse cx="14.500" cy="7.500" rx="3.600" ry="3.300" fill="#fff" stroke="#3a3a3a" stroke-width="1"/><path d="M10 3.500l2.200 1.500-1.200 2zM19.500 3.300l-2.500 1.700 1.500 2z" fill="#444"/><path d="M10.500 6c-2 2-2 4-3 6s0 4-1 6M8.500 8c-1.500 3 0 5-1 8M19 6c2 2 2 4 3.500 6s-.5 4 .5 6M21 8.500c1.500 3 0 5 1.500 7.500M12.500 11.500L7.500 9l-1.500 1M17 11.500l5.500-2 1.500 1.500M12.500 11l-1 9.500M17 11l1 9.500M13.500 12l1 4 1-4" fill="none" stroke="#4a4a4a" stroke-width=".9"/><circle cx="13.200" cy="7.800" r=".8" fill="#222"/><circle cx="16" cy="7.900" r=".7" fill="#222"/><path d="M11 20h7.500l.5 2.300h-8.500z" fill="#555"/><path d="M12 22.300h2.500l-.3 8h-2.600zM15.200 22.300h2.300v8h-2.100z" fill="#555"/></svg>
<div class="t" style="left:76px;top:12px;color:#e8e8e8">图层 4</div>
</div>
<div class="a" style="left:0;top:261px;width:236px;height:39px;border-bottom:1px solid #444">
<div class="a" style="left:30px;top:0;width:1px;height:38px;background:#474747"></div>
<div class="a" style="left:9px;top:13px;width:12px;height:12px;background:#505050;border:1px solid #494949;border-right-color:#5c5c5c;border-bottom-color:#5c5c5c"></div>
<svg style="left:34px;top:3px" width="32" height="32" viewBox="-.5 -.5 32 32"><rect x="0" y="0" width="31" height="31" fill="#fff" stroke="#2a2a2a" stroke-width="1"/><ellipse cx="14.500" cy="7.500" rx="3.600" ry="3.300" fill="#fff" stroke="#3a3a3a" stroke-width="1"/><path d="M10 3.500l2.200 1.500-1.200 2zM19.500 3.300l-2.500 1.700 1.500 2z" fill="#444"/><path d="M10.500 6c-2 2-2 4-3 6s0 4-1 6M8.500 8c-1.500 3 0 5-1 8M19 6c2 2 2 4 3.500 6s-.5 4 .5 6M21 8.500c1.500 3 0 5 1.500 7.500M12.500 11.500L7.500 9l-1.500 1M17 11.500l5.500-2 1.500 1.500M12.500 11l-1 9.500M17 11l1 9.500M13.500 12l1 4 1-4" fill="none" stroke="#4a4a4a" stroke-width=".9"/><circle cx="13.200" cy="7.800" r=".8" fill="#222"/><circle cx="16" cy="7.900" r=".7" fill="#222"/><path d="M11 20h7.500l.5 2.300h-8.500z" fill="#555"/><path d="M12 22.300h2.500l-.3 8h-2.600zM15.200 22.300h2.300v8h-2.100z" fill="#555"/></svg>
<div class="t" style="left:76px;top:12px;color:#e8e8e8">图层 3</div>
</div>
<div class="a" style="left:0;top:300px;width:236px;height:39px;border-bottom:1px solid #444">
<div class="a" style="left:30px;top:0;width:1px;height:38px;background:#474747"></div>
<div class="a" style="left:9px;top:13px;width:12px;height:12px;background:#505050;border:1px solid #494949;border-right-color:#5c5c5c;border-bottom-color:#5c5c5c"></div>
<svg style="left:34px;top:3px" width="32" height="32" viewBox="-.5 -.5 32 32"><rect x="0" y="0" width="31" height="31" fill="#fff" stroke="#2a2a2a" stroke-width="1"/><ellipse cx="14.500" cy="7.500" rx="3.600" ry="3.300" fill="#fff" stroke="#3a3a3a" stroke-width="1"/><path d="M10 3.500l2.200 1.500-1.200 2zM19.500 3.300l-2.500 1.700 1.500 2z" fill="#444"/><path d="M10.500 6c-2 2-2 4-3 6s0 4-1 6M8.500 8c-1.500 3 0 5-1 8M19 6c2 2 2 4 3.500 6s-.5 4 .5 6M21 8.500c1.500 3 0 5 1.500 7.500M12.500 11.500L7.500 9l-1.500 1M17 11.500l5.500-2 1.500 1.500M12.500 11l-1 9.500M17 11l1 9.500M13.500 12l1 4 1-4" fill="none" stroke="#4a4a4a" stroke-width=".9"/><circle cx="13.200" cy="7.800" r=".8" fill="#222"/><circle cx="16" cy="7.900" r=".7" fill="#222"/><path d="M11 20h7.500l.5 2.300h-8.500z" fill="#555"/><path d="M12 22.300h2.500l-.3 8h-2.600zM15.200 22.300h2.300v8h-2.100z" fill="#555"/></svg>
<div class="t" style="left:76px;top:12px;color:#e8e8e8">图层 2</div>
</div>
<div class="a" style="left:0;top:339px;width:236px;height:39px;border-bottom:1px solid #444">
<div class="a" style="left:31px;top:0;width:205px;height:38px;background:#6b6b6b"></div>
<div class="a" style="left:30px;top:0;width:1px;height:38px;background:#474747"></div>
<svg style="left:9px;top:14.5px" width="14" height="10" viewBox="0 0 15 11"><path d="M.5 5.500C3 1.500 5.500.8 7.500.8s4.500.7 7 4.700c-2.500 4-5 4.700-7 4.700S3 9.500.5 5.500z" fill="#e8e8e8"/><circle cx="7.500" cy="5.300" r="2.600" fill="#535353"/><circle cx="7.500" cy="5.300" r="1.200" fill="#e8e8e8"/></svg>
<svg style="left:32px;top:1px" width="37" height="37" viewBox="0 0 37 37"><path d="M.5 8V.5H8M29 .5h7.500V8M36.500 29v7.500H29M8 36.500H.5V29" fill="none" stroke="#fff" stroke-width="1"/></svg>
<svg style="left:34px;top:3px" width="32" height="32" viewBox="-.5 -.5 32 32"><rect x="0" y="0" width="31" height="31" fill="#fff" stroke="#2a2a2a" stroke-width="2"/><ellipse cx="14.500" cy="7.500" rx="3.600" ry="3.300" fill="#fff" stroke="#3a3a3a" stroke-width="1"/><path d="M10 3.500l2.200 1.500-1.200 2zM19.500 3.300l-2.500 1.700 1.500 2z" fill="#444"/><path d="M10.500 6c-2 2-2 4-3 6s0 4-1 6M8.500 8c-1.500 3 0 5-1 8M19 6c2 2 2 4 3.500 6s-.5 4 .5 6M21 8.500c1.500 3 0 5 1.500 7.500M12.500 11.500L7.500 9l-1.500 1M17 11.500l5.500-2 1.500 1.500M12.500 11l-1 9.500M17 11l1 9.500M13.500 12l1 4 1-4" fill="none" stroke="#4a4a4a" stroke-width=".9"/><circle cx="13.200" cy="7.800" r=".8" fill="#222"/><circle cx="16" cy="7.900" r=".7" fill="#222"/><path d="M11 20h7.500l.5 2.300h-8.500z" fill="#555"/><path d="M12 22.300h2.500l-.3 8h-2.600zM15.200 22.300h2.300v8h-2.100z" fill="#555"/></svg>
<div class="t" style="left:76px;top:12px;color:#e8e8e8">图层 1</div>
</div>
</div>
<div class="a" style="left:1663px;top:636px;width:14px;height:378px;background:#4d4d4d"></div>
<div class="a" style="left:1664px;top:876px;width:11px;height:121px;background:#6a6a6a"></div>
<svg style="left:1665px;top:646px" width="10" height="6" viewBox="0 0 10 6"><path d="M1 5l4-3.800 4 3.800" fill="none" stroke="#8a8a8a" stroke-width="1.200"/></svg>
<svg style="left:1665px;top:1001px" width="10" height="6" viewBox="0 0 10 6"><path d="M1 1l4 3.800 4-3.800" fill="none" stroke="#8a8a8a" stroke-width="1.200"/></svg>
<div class="a bg1" style="left:1427px;top:1014px;width:250px;height:25px"></div>
<div class="a" style="left:1427px;top:1014px;width:250px;height:1px;background:#474747"></div>
<svg style="left:1474px;top:1023px" width="15" height="8" viewBox="0 0 16 9"><rect x=".7" y=".7" width="8.500" height="6.600" rx="3.300" fill="none" stroke="#8e8e8e" stroke-width="1.300"/><rect x="6.800" y=".7" width="8.500" height="6.600" rx="3.300" fill="none" stroke="#8e8e8e" stroke-width="1.300"/><path d="M4.500 4h7" stroke="#8e8e8e" stroke-width="1.300"/></svg>
<div class="t" style="left:1502px;top:1018px;font-style:italic;font-size:13.5px;color:#d6d6d6;letter-spacing:-.3px">fx</div>
<svg style="left:1514px;top:1033px" width="4" height="3" viewBox="0 0 4 3"><path d="M0 0h4L2 3z" fill="#d6d6d6"/></svg>
<svg style="left:1527px;top:1021px" width="14" height="11" viewBox="0 0 14 11"><rect width="14" height="11" fill="#d6d6d6"/><circle cx="7" cy="5.500" r="3.200" fill="#535353"/></svg>
<svg style="left:1556px;top:1021px" width="12" height="12" viewBox="0 0 12 12"><circle cx="6" cy="6" r="5" fill="none" stroke="#d6d6d6" stroke-width="1.300"/><path d="M2.500 9.500A5 5 0 009.500 2.500z" fill="#d6d6d6"/></svg>
<svg style="left:1567px;top:1033px" width="4" height="3" viewBox="0 0 4 3"><path d="M0 0h4L2 3z" fill="#d6d6d6"/></svg>
<svg style="left:1582px;top:1021px" width="14" height="11" viewBox="0 0 14 11"><path d="M0 0h5l1.500 1.500H14V11H0z" fill="#d0d0d0"/></svg>
<svg style="left:1610px;top:1021px" width="11" height="11" viewBox="0 0 11 11"><path d="M.8.800h9.400v9.400H4.500L.8 6.500z" fill="none" stroke="#d6d6d6" stroke-width="1.300"/><path d="M.8 6.500h3.700v3.700z" fill="#d6d6d6"/></svg>
<svg style="left:1637px;top:1020px" width="11" height="13" viewBox="0 0 11 13"><path d="M0 2.500h11M3.500 2.500V.8h4v1.700M1.300 2.500l.5 9.800h7.400l.5-9.800M3.800 4.500v6M5.500 4.500v6M7.200 4.500v6" fill="none" stroke="#d6d6d6" stroke-width="1.100"/></svg>
<!-- ===== library panel ===== -->
<div class="a bg2" style="left:1680px;top:75px;width:239px;height:28px"></div>
<div class="a bg1" style="left:1680px;top:75px;width:38px;height:29px"></div>
<div class="a bd" style="left:1718px;top:76px;width:1px;height:27px"></div>
<div class="t" style="left:1690px;top:81px;color:#f0f0f0">库</div>
<svg style="left:1901px;top:85px" width="9" height="8" viewBox="0 0 10 8"><path d="M0 .6h10M0 2.900h10M0 5.200h10M0 7.500h10" stroke="#c4c4c4" stroke-width="1"/></svg>
<div class="dd" style="left:1688px;top:111px;width:166px;height:19px;background:#474747"></div>
<div class="t" style="left:1698px;top:113px;color:#ececec">我的库</div>
<svg style="left:1840px;top:118px" width="9" height="6" viewBox="0 0 9 6"><path d="M0.7 0.8l3.800 3.800 3.800-3.800" fill="none" stroke-width="1.200" stroke="#c9c9c9"/></svg>
<div class="a" style="left:1863px;top:110px;width:21px;height:21px;background:#383838;border-radius:2px"></div>
<svg style="left:1868px;top:115px" width="11" height="11" viewBox="0 0 11 11"><path d="M0 0h5v5H0zM6 0h5v5H6zM0 6h5v5H0zM6 6h5v5H6z" fill="#e8e8e8"/></svg>
<svg style="left:1892px;top:115px" width="12" height="11" viewBox="0 0 12 11"><path d="M0 1h12M0 4h12M0 7h12M0 10h12" stroke="#e0e0e0" stroke-width="1.600"/></svg>
<svg style="left:1687px;top:143px" width="12" height="12" viewBox="0 0 12 12"><circle cx="7.300" cy="4.700" r="3.500" fill="none" stroke="#d6d6d6" stroke-width="1.400"/><path d="M4.800 7.200L1 11" stroke="#d6d6d6" stroke-width="1.800"/></svg>
<div class="t" style="left:1708px;top:141px;color:#7a7a7a;font-size:11px">搜索 Adobe Stock</div>
<svg style="left:1899px;top:146px" width="9" height="6" viewBox="0 0 9 6"><path d="M0.7 0.8l3.800 3.800 3.800-3.800" fill="none" stroke-width="1.200" stroke="#c9c9c9"/></svg>
<div class="a" style="left:1688px;top:159px;width:222px;height:1px;background:#626262"></div>
<div class="a" style="left:1680px;top:165px;width:239px;height:1px;background:#464646"></div>
<div class="a" style="left:1680px;top:166px;width:223px;height:848px;background:#4d4d4d"></div>
<div class="a" style="left:1903px;top:166px;width:16px;height:848px;background:#525252"></div>
<div class="a" style="left:1680px;top:1014px;width:239px;height:1px;background:#474747"></div>
<!-- drop zone -->
<svg style="left:1743px;top:465px" width="98" height="98" viewBox="0 0 98 98"><circle cx="49" cy="49" r="47.500" fill="none" stroke="#7a7a7a" stroke-width="1.500" stroke-dasharray="6 4.700"/><path d="M49 42v14M42 49h14" stroke="#858585" stroke-width="2"/></svg>
<div class="t" style="left:1680px;top:581px;width:224px;text-align:center;font-size:14px;color:#e6e6e6;line-height:18px;height:18px">拖放资料</div>
<div class="t" style="left:1680px;top:610px;width:224px;text-align:center;font-size:11px;color:#8c8c8c;line-height:14.500px;height:44px;white-space:normal;padding:0 24px">在您的文档中拖放任何资料以添加图形，或者使用以下按钮来添加颜色和图层样式等。</div>
<svg style="left:1783px;top:665px" width="17" height="17" viewBox="0 0 17 17"><circle cx="8.500" cy="8.500" r="7.500" fill="none" stroke="#9a9a9a" stroke-width="1.400"/><text x="8.500" y="12.300" text-anchor="middle" font-family="Liberation Sans,sans-serif" font-size="11" font-weight="bold" fill="#9a9a9a">?</text></svg>
<div class="t" style="left:1680px;top:700px;width:224px;text-align:center;font-size:11px;color:#9a9a9a;text-decoration:underline">从文档新建库...</div>
<!-- bottom bar -->
<svg style="left:1691px;top:1021px" width="12" height="12" viewBox="0 0 12 12"><path d="M6 0v12M0 6h12" stroke="#e0e0e0" stroke-width="2"/></svg>
<svg style="left:1715px;top:1020px" width="13" height="13" viewBox="0 0 13 13"><path d="M6.500 0l5 5H8.500v4h-4V5H1.500z" fill="#e0e0e0"/><path d="M1 11h11M1 13h11" stroke="#e0e0e0" stroke-width="1.200"/></svg>
<svg style="left:1857px;top:1020px" width="20" height="13" viewBox="0 0 20 13"><circle cx="6.800" cy="6.500" r="4.600" fill="none" stroke="#d0d0d0" stroke-width="1.900"/><circle cx="13.200" cy="6.500" r="4.600" fill="none" stroke="#d0d0d0" stroke-width="1.900"/></svg>
<svg style="left:1886px;top:1020px" width="11" height="13" viewBox="0 0 11 13"><path d="M0 2.500h11M3.500 2.500V.8h4v1.700M1.300 2.500l.5 9.800h7.400l.5-9.800M3.800 4.500v6M5.500 4.500v6M7.200 4.500v6" fill="none" stroke="#777" stroke-width="1.100"/></svg>
<!-- external meter widget at far right -->
<div class="a" style="left:1910px;top:75px;width:12px;height:58px;background:#2d3547;border:1px solid #1e2433;border-radius:3px"></div>
<div class="a" style="left:1914px;top:83px;width:5px;height:14px;background:repeating-linear-gradient(180deg,#3a4660 0 1.500px,#2d3547 1.500px 2.500px)"></div>
<div class="a" style="left:1914px;top:97px;width:5px;height:20px;background:repeating-linear-gradient(180deg,#c9c84a 0 1.500px,#2d3547 1.500px 2.500px)"></div>
<div class="a" style="left:1914px;top:117px;width:5px;height:11px;background:repeating-linear-gradient(180deg,#3fc1b0 0 1.500px,#2d3547 1.500px 2.500px)"></div>
</body>
</html>
